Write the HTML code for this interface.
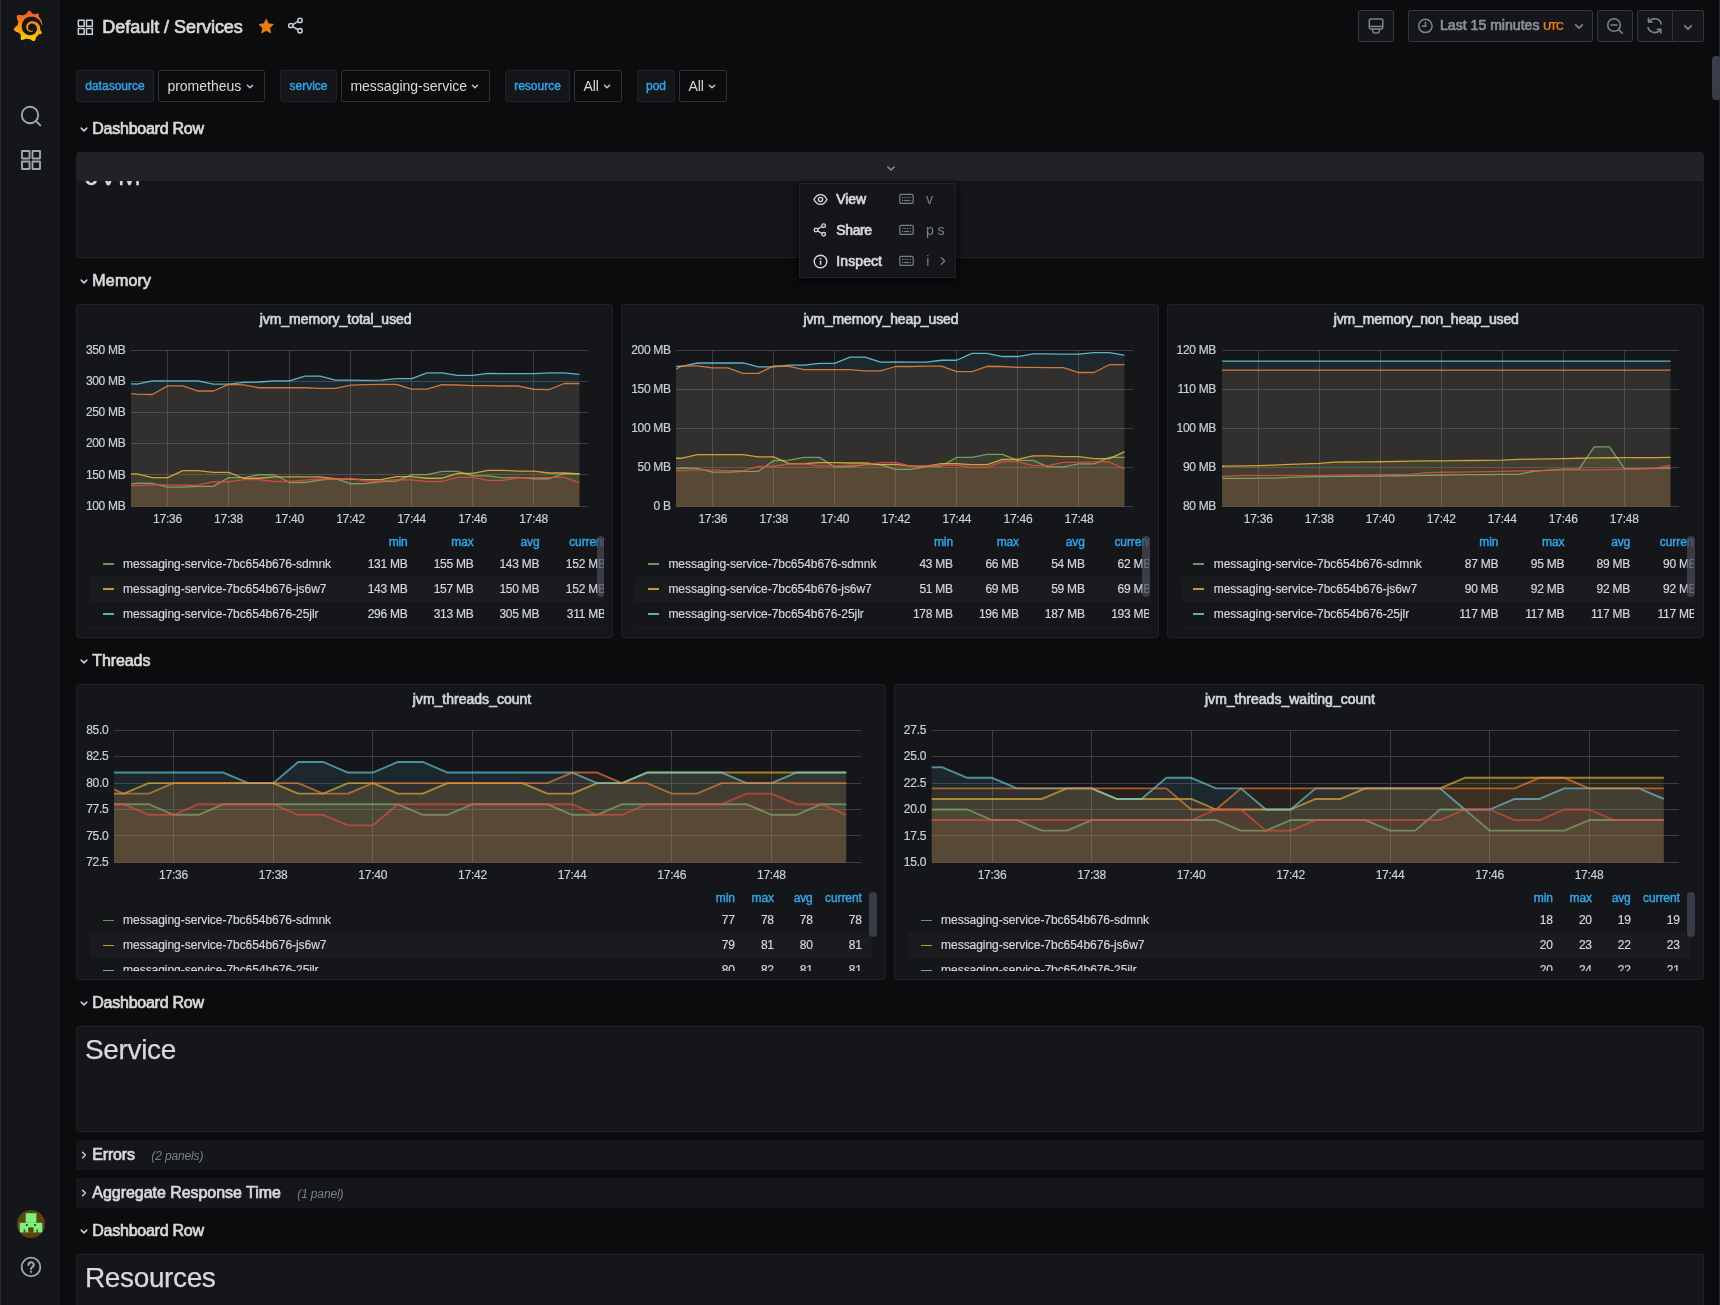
<!DOCTYPE html>
<html><head><meta charset="utf-8"><title>Services - Grafana</title>
<style>
html,body{margin:0;padding:0;background:#0b0c0e;}
body{width:1720px;height:1305px;position:relative;overflow:hidden;font-family:"Liberation Sans",sans-serif;}
.t{position:absolute;white-space:nowrap;margin:0;padding:0;}
.b{position:absolute;display:block;}
#root{position:absolute;left:0;top:0;width:1720px;height:1305px;will-change:transform;}
</style></head><body><div id="root">
<div class="b" style="left:0px;top:0px;width:60px;height:1305px;background:#141619;"></div>
<div class="b" style="left:0px;top:0px;width:1px;height:1305px;background:#2b2d32;"></div>
<svg class="b" style="left:13.1px;top:9.8px;" width="30" height="31.5" viewBox="0 0 351 365"><defs><linearGradient id="lg" gradientUnits="userSpaceOnUse" x1="175.5" y1="445" x2="175.5" y2="30"><stop offset="0" stop-color="#FFF100"/><stop offset="1" stop-color="#F05A28"/></linearGradient></defs><path fill="url(#lg)" d="M342,161.2c-0.6-6.1-1.6-13.1-3.6-20.9c-2-7.7-5-16.2-9.4-25c-4.4-8.8-10.1-17.9-17.5-26.8c-2.9-3.5-6.1-6.9-9.5-10.2c5.1-20.3-6.2-37.9-6.2-37.9c-19.5-1.2-31.9,6.1-36.5,9.4c-0.8-0.3-1.5-0.7-2.3-1c-3.3-1.3-6.7-2.6-10.3-3.7c-3.5-1.1-7.1-2.1-10.8-3c-3.7-0.9-7.4-1.6-11.2-2.2c-0.7-0.1-1.3-0.2-2-0.3c-8.5-27.2-32.9-38.6-32.9-38.6c-27.3,17.3-32.4,41.5-32.4,41.5s-0.1,0.5-0.3,1.4c-1.5,0.4-3,0.9-4.5,1.3c-2.1,0.6-4.2,1.4-6.2,2.2c-2.1,0.8-4.1,1.6-6.2,2.5c-4.1,1.8-8.2,3.8-12.2,6c-3.9,2.2-7.7,4.6-11.4,7.1c-0.5-0.2-1-0.4-1-0.4c-37.8-14.4-71.3,2.9-71.3,2.9c-3.1,40.2,15.1,65.5,18.7,70.1c-0.9,2.5-1.7,5-2.5,7.5c-2.8,9.1-4.9,18.4-6.2,28.1c-0.2,1.4-0.4,2.8-0.5,4.2C18.8,192.7,8.5,228,8.5,228c29.1,33.5,63.1,35.6,63.1,35.6c0,0,0.1-0.1,0.1-0.1c4.3,7.7,9.3,15,14.9,21.9c2.4,2.9,4.8,5.6,7.4,8.3c-10.6,30.4,1.5,55.6,1.5,55.6c32.4,1.2,53.7-14.2,58.2-17.7c3.2,1.1,6.5,2.1,9.8,2.9c10,2.6,20.2,4.1,30.4,4.5c2.5,0.1,5.1,0.2,7.6,0.1l1.2,0l0.8,0l1.6,0l1.6-0.1l0,0.1c15.3,21.8,42.1,24.9,42.1,24.9c19.1-20.1,20.2-40.1,20.2-44.4l0,0c0,0,0-0.1,0-0.3c0-0.4,0-0.6,0-0.6l0,0c0-0.3,0-0.6,0-0.9c4-2.8,7.8-5.8,11.4-9.1c7.6-6.9,14.3-14.8,19.9-23.3c0.5-0.8,1-1.6,1.5-2.4c21.6,1.2,36.9-13.4,36.9-13.4c-3.6-22.5-16.4-33.5-19.1-35.6l0,0c0,0-0.1-0.1-0.3-0.2c-0.2-0.1-0.2-0.2-0.2-0.2c0,0,0,0,0,0c-0.1-0.1-0.3-0.2-0.5-0.3c0.1-1.4,0.2-2.7,0.3-4.1c0.2-2.4,0.2-4.9,0.2-7.3l0-1.8l0-0.9l0-0.5c0-0.6,0-0.4,0-0.6l-0.1-1.5l-0.1-2c0-0.7-0.1-1.3-0.2-1.9c-0.1-0.6-0.1-1.3-0.2-1.9l-0.2-1.9l-0.3-1.9c-0.4-2.5-0.8-4.9-1.4-7.4c-2.3-9.7-6.1-18.9-11-27.2c-5-8.3-11.2-15.6-18.3-21.8c-7-6.2-14.9-11.2-23.1-14.9c-8.3-3.7-16.9-6.1-25.5-7.2c-4.3-0.6-8.6-0.8-12.9-0.7l-1.6,0l-0.4,0c-0.1,0-0.6,0-0.5,0l-0.7,0l-1.6,0.1c-0.6,0-1.2,0.1-1.7,0.1c-2.2,0.2-4.4,0.5-6.5,0.9c-8.6,1.6-16.7,4.7-23.8,9c-7.1,4.3-13.3,9.6-18.3,15.6c-5,6-8.9,12.7-11.6,19.6c-2.7,6.9-4.2,14.1-4.6,21c-0.1,1.7-0.1,3.5-0.1,5.2c0,0.4,0,0.9,0,1.3l0.1,1.4c0.1,0.8,0.1,1.7,0.2,2.5c0.3,3.5,1,6.9,1.9,10.1c1.9,6.5,4.9,12.4,8.6,17.4c3.7,5,8.2,9.1,12.9,12.4c4.7,3.2,9.8,5.5,14.8,7c5,1.5,10,2.1,14.7,2.1c0.6,0,1.2,0,1.7,0c0.3,0,0.6,0,0.9,0c0.3,0,0.6,0,0.9-0.1c0.5,0,1-0.1,1.5-0.1c0.1,0,0.3,0,0.4-0.1l0.5-0.1c0.3,0,0.6-0.1,0.9-0.1c0.6-0.1,1.1-0.2,1.7-0.3c0.6-0.1,1.1-0.2,1.6-0.4c1.1-0.2,2.1-0.6,3.1-0.9c2-0.7,4-1.5,5.7-2.4c1.8-0.9,3.4-2,5-3c0.4-0.3,0.9-0.6,1.3-1c1.6-1.3,1.9-3.7,0.6-5.3c-1.1-1.4-3.1-1.8-4.7-0.9c-0.4,0.2-0.8,0.4-1.2,0.6c-1.4,0.7-2.8,1.3-4.3,1.8c-1.5,0.5-3.1,0.9-4.7,1.2c-0.8,0.1-1.6,0.2-2.5,0.3c-0.4,0-0.8,0.1-1.3,0.1c-0.4,0-0.9,0-1.2,0c-0.4,0-0.8,0-1.2,0c-0.5,0-1,0-1.5-0.1c0,0-0.3,0-0.1,0l-0.2,0l-0.3,0c-0.2,0-0.5,0-0.7-0.1c-0.5-0.1-0.9-0.1-1.4-0.2c-3.7-0.5-7.4-1.6-10.9-3.2c-3.6-1.6-7-3.8-10.1-6.6c-3.1-2.8-5.8-6.1-7.9-9.9c-2.1-3.8-3.6-8-4.3-12.4c-0.3-2.2-0.5-4.5-0.4-6.7c0-0.6,0.1-1.2,0.1-1.8c0,0.2,0-0.1,0-0.1l0-0.2l0-0.5c0-0.3,0.1-0.6,0.1-0.9c0.1-1.2,0.3-2.4,0.5-3.6c1.7-9.6,6.5-19,13.9-26.1c1.9-1.8,3.9-3.4,6-4.9c2.1-1.5,4.4-2.8,6.8-3.9c2.4-1.1,4.8-2,7.4-2.7c2.5-0.7,5.1-1.1,7.8-1.4c1.3-0.1,2.6-0.2,4-0.2c0.4,0,0.6,0,0.9,0l1.1,0l0.7,0c0.3,0,0,0,0.1,0l0.3,0l1.1,0.1c2.9,0.2,5.7,0.6,8.5,1.3c5.6,1.2,11.1,3.3,16.2,6.1c10.2,5.7,18.9,14.5,24.2,25.1c2.7,5.3,4.6,11,5.5,16.9c0.2,1.5,0.4,3,0.5,4.5l0.1,1.1l0.1,1.1c0,0.4,0,0.8,0,1.1c0,0.4,0,0.8,0,1.1l0,1l0,1.1c0,0.7-0.1,1.9-0.1,2.6c-0.1,1.6-0.3,3.3-0.5,4.9c-0.2,1.6-0.5,3.2-0.8,4.8c-0.3,1.6-0.7,3.2-1.1,4.7c-0.8,3.1-1.8,6.2-3,9.3c-2.4,6-5.6,11.8-9.4,17.1c-7.7,10.6-18.2,19.2-30.2,24.7c-6,2.7-12.3,4.7-18.8,5.7c-3.2,0.6-6.5,0.9-9.8,1l-0.6,0l-0.5,0l-1.1,0l-1.6,0l-0.8,0c0.4,0-0.1,0-0.1,0l-0.3,0c-1.8,0-3.5-0.1-5.3-0.3c-7-0.5-13.9-1.8-20.7-3.7c-6.7-1.9-13.2-4.6-19.4-7.8c-12.3-6.6-23.4-15.6-32-26.5c-4.3-5.4-8.1-11.3-11.2-17.4c-3.1-6.1-5.6-12.6-7.4-19.1c-1.8-6.6-2.9-13.3-3.4-20.1l-0.1-1.3l0-0.3l0-0.3l0-0.6l0-1.1l0-0.3l0-0.4l0-0.8l0-1.6l0-0.3c0,0,0,0.1,0-0.1l0-0.6c0-0.8,0-1.7,0-2.5c0.1-3.3,0.4-6.8,0.8-10.2c0.4-3.4,1-6.9,1.7-10.3c0.7-3.4,1.5-6.8,2.5-10.2c1.9-6.7,4.3-13.2,7.1-19.3c5.7-12.2,13.1-23.1,22-31.8c2.2-2.2,4.5-4.2,6.9-6.2c2.4-1.9,4.9-3.7,7.5-5.4c2.5-1.7,5.2-3.2,7.9-4.6c1.3-0.7,2.7-1.4,4.1-2c0.7-0.3,1.4-0.6,2.1-0.9c0.7-0.3,1.4-0.6,2.1-0.9c2.8-1.2,5.7-2.2,8.7-3.1c0.7-0.2,1.5-0.4,2.2-0.7c0.7-0.2,1.5-0.4,2.2-0.6c1.5-0.4,3-0.8,4.5-1.1c0.7-0.2,1.5-0.3,2.3-0.5c0.8-0.2,1.5-0.3,2.3-0.5c0.8-0.1,1.5-0.3,2.3-0.4l1.1-0.2l1.2-0.2c0.8-0.1,1.5-0.2,2.3-0.3c0.9-0.1,1.7-0.2,2.6-0.3c0.7-0.1,1.9-0.2,2.6-0.3c0.5-0.1,1.1-0.1,1.6-0.2l1.1-0.1l0.5-0.1l0.6,0c0.9-0.1,1.7-0.1,2.6-0.2l1.3-0.1c0,0,0.5,0,0.1,0l0.3,0l0.6,0c0.7,0,1.5-0.1,2.2-0.1c2.9-0.1,5.9-0.1,8.8,0c5.8,0.2,11.5,0.9,17,1.9c11.1,2.1,21.5,5.6,31,10.3c9.5,4.6,17.9,10.3,25.3,16.5c0.5,0.4,0.9,0.8,1.4,1.2c0.4,0.4,0.9,0.8,1.3,1.2c0.9,0.8,1.7,1.6,2.6,2.4c0.9,0.8,1.7,1.6,2.5,2.4c0.8,0.8,1.6,1.6,2.4,2.5c3.1,3.3,6,6.6,8.6,10c5.2,6.7,9.4,13.5,12.7,19.9c0.2,0.4,0.4,0.8,0.6,1.2c0.2,0.4,0.4,0.8,0.6,1.2c0.4,0.8,0.8,1.6,1.1,2.4c0.4,0.8,0.7,1.5,1.1,2.3c0.3,0.8,0.7,1.5,1,2.3c1.2,3,2.4,5.9,3.3,8.6c1.5,4.4,2.6,8.3,3.5,11.7c0.3,1.4,1.6,2.3,3,2.1c1.5-0.1,2.6-1.3,2.6-2.8C342.6,170.4,342.5,166.1,342,161.2z"/></svg>
<svg class="b" style="left:19px;top:104px;" width="24" height="24" viewBox="0 0 24 24"><circle cx="11" cy="11" r="8.2" fill="none" stroke="#9fa7b3" stroke-width="1.9"/><path d="M17 17 L21.3 21.3" stroke="#9fa7b3" stroke-width="1.9" stroke-linecap="round"/></svg>
<svg class="b" style="left:18.85px;top:147.8px;" width="24" height="24" viewBox="0 0 24 24"><rect x="3" y="3" width="7.5" height="7.5" rx="0.15" fill="none" stroke="#9fa7b3" stroke-width="1.9"/><rect x="13.5" y="3" width="7.5" height="7.5" rx="0.15" fill="none" stroke="#9fa7b3" stroke-width="1.9"/><rect x="3" y="13.5" width="7.5" height="7.5" rx="0.15" fill="none" stroke="#9fa7b3" stroke-width="1.9"/><rect x="13.5" y="13.5" width="7.5" height="7.5" rx="0.15" fill="none" stroke="#9fa7b3" stroke-width="1.9"/></svg>
<svg class="b" style="left:17px;top:1210px;" width="28" height="28" viewBox="0 0 28 28"><defs><clipPath id="avc"><circle cx="14" cy="14" r="14"/></clipPath></defs><g clip-path="url(#avc)"><rect width="28" height="28" fill="#5c4411"/><rect x="8.7" y="3.2" width="10.7" height="9.6" fill="#7cf07c"/><rect x="2.7" y="12.8" width="22.6" height="9.6" fill="#7cf07c"/><rect x="8.9" y="14.1" width="1.8" height="1.8" fill="#3e3a10"/><rect x="17.1" y="14.1" width="1.8" height="1.8" fill="#3e3a10"/><rect x="11.2" y="17.4" width="5.4" height="5.2" fill="#5c4411"/><rect x="6.7" y="19.4" width="1.5" height="3.2" fill="#5c4411"/><rect x="19.4" y="19.4" width="1.5" height="3.2" fill="#5c4411"/></g></svg>
<svg class="b" style="left:19px;top:1255px;" width="24" height="24" viewBox="0 0 24 24"><circle cx="12" cy="12" r="9.3" fill="none" stroke="#9fa7b3" stroke-width="1.8"/><path d="M9.5 9.9 a2.6 2.6 0 1 1 3.9 2.2 c-.9 .55-1.4 1-1.4 2" fill="none" stroke="#9fa7b3" stroke-width="2.0" stroke-linecap="round"/><circle cx="12" cy="16.8" r="1.15" fill="#9fa7b3"/></svg>
<svg class="b" style="left:75.55px;top:17.8px;" width="18.7" height="18.7" viewBox="0 0 24 24"><rect x="3" y="3" width="7.5" height="7.5" rx="0.15" fill="none" stroke="#c7d0d9" stroke-width="1.9"/><rect x="13.5" y="3" width="7.5" height="7.5" rx="0.15" fill="none" stroke="#c7d0d9" stroke-width="1.9"/><rect x="3" y="13.5" width="7.5" height="7.5" rx="0.15" fill="none" stroke="#c7d0d9" stroke-width="1.9"/><rect x="13.5" y="13.5" width="7.5" height="7.5" rx="0.15" fill="none" stroke="#c7d0d9" stroke-width="1.9"/></svg>
<div class="t" style="left:102.30px;top:13.70px;font-size:18px;line-height:27px;color:#d8d9da;letter-spacing:-0.031px;-webkit-text-stroke:0.7px currentColor;">Default / Services</div>
<svg class="b" style="left:257.9px;top:17.9px;" width="16.4" height="16.4" viewBox="0 0 18 18"><path d="M9 1.2 L11.4 6.3 L17 7 L12.9 10.9 L14 16.5 L9 13.7 L4 16.5 L5.1 10.9 L1 7 L6.6 6.3 Z" fill="#eb7b18" stroke="#eb7b18" stroke-width="0.8" stroke-linejoin="round"/></svg>
<svg class="b" style="left:286.3px;top:16.4px;" width="19.2" height="19.2" viewBox="0 0 24 24"><g fill="none" stroke="#c7d0d9" stroke-width="1.9"><circle cx="17.5" cy="5.5" r="2.7"/><circle cx="6" cy="12" r="2.7"/><circle cx="17.5" cy="18.5" r="2.7"/><path d="M8.4 10.7 L15.1 6.8 M8.4 13.3 L15.1 17.2"/></g></svg>
<div class="b" style="left:1358px;top:10px;width:36px;height:32px;background:#141619;border:1px solid #33363a;box-sizing:border-box;border-radius:2px;"></div>
<svg class="b" style="left:1367px;top:17px;" width="18" height="18" viewBox="0 0 18 18"><g fill="none" stroke="#7f848c" stroke-width="1.5" stroke-linejoin="round"><rect x="5.9" y="11" width="6.3" height="4.9" rx="1.3"/><rect x="2.3" y="2.1" width="13.5" height="9.9" rx="1.4" fill="#141619"/><path d="M2.3 9.4 H15.8"/></g></svg>
<div class="b" style="left:1408px;top:10px;width:185px;height:32px;background:#141619;border:1px solid #33363a;box-sizing:border-box;border-radius:2px;"></div>
<svg class="b" style="left:1416px;top:17px;" width="18" height="18" viewBox="0 0 18 18"><g fill="none" stroke="#7f848c" stroke-width="1.5" stroke-linecap="round"><circle cx="9.4" cy="8.9" r="6.7"/><path d="M9.5 5.2 V9.3 H6.3"/></g></svg>
<div class="t" style="left:1440.00px;top:15.00px;font-size:14px;line-height:21px;color:#8b9099;letter-spacing:0.044px;-webkit-text-stroke:0.7px currentColor;">Last 15 minutes</div>
<div class="t" style="left:1543.00px;top:18.00px;font-size:11.5px;line-height:17px;color:#eb7b18;letter-spacing:-1.345px;font-weight:700;">UTC</div>
<svg class="b" style="left:1571px;top:18px;" width="16" height="16" viewBox="0 0 16 16"><path d="M4.7 6.85 L8 10.15 L11.3 6.85" fill="none" stroke="#7f848c" stroke-width="1.6" stroke-linecap="round" stroke-linejoin="round"/></svg>
<div class="b" style="left:1597px;top:10px;width:36px;height:32px;background:#141619;border:1px solid #33363a;box-sizing:border-box;border-radius:2px;"></div>
<svg class="b" style="left:1606px;top:17px;" width="18" height="18" viewBox="0 0 18 18"><g fill="none" stroke="#7f848c" stroke-width="1.6" stroke-linecap="round"><circle cx="8" cy="8" r="6.3"/><path d="M5.2 8 H10.8"/><path d="M12.7 12.7 L16.3 16.3"/></g></svg>
<div class="b" style="left:1637px;top:10px;width:67px;height:32px;background:#141619;border:1px solid #33363a;box-sizing:border-box;border-radius:2px;"></div>
<div class="b" style="left:1672px;top:10px;width:1px;height:32px;background:#33363a;"></div>
<svg class="b" style="left:1645.3px;top:16.4px;" width="19.3" height="19.3" viewBox="0 0 18 18"><g fill="none" stroke="#7f848c" stroke-width="1.5" stroke-linecap="round" stroke-linejoin="round"><path d="M15.2 7.2 A6.5 6.5 0 0 0 3.6 5.4"/><path d="M2.8 10.8 A6.5 6.5 0 0 0 14.4 12.6"/><path d="M3.2 2.2 V5.6 H6.6"/><path d="M14.8 15.8 V12.4 H11.4"/></g></svg>
<svg class="b" style="left:1680px;top:18.5px;" width="16" height="16" viewBox="0 0 16 16"><path d="M4.7 6.85 L8 10.15 L11.3 6.85" fill="none" stroke="#7f848c" stroke-width="1.6" stroke-linecap="round" stroke-linejoin="round"/></svg>
<div class="b" style="left:1712px;top:56px;width:9px;height:44px;background:linear-gradient(#3c3e50,#3a3b40);border-radius:4px;"></div>
<div class="b" style="left:1719px;top:0px;width:1px;height:1305px;background:rgba(60,62,68,0.55);"></div>
<div class="b" style="left:76px;top:70px;width:78px;height:32px;background:#141619;border:1px solid #202226;box-sizing:border-box;border-radius:2px;"></div>
<div class="t" style="left:85.26px;top:77.00px;font-size:12px;line-height:18px;color:#33a2e5;letter-spacing:0.013px;-webkit-text-stroke:0.45px currentColor;">datasource</div>
<div class="b" style="left:158px;top:70px;width:107px;height:32px;background:#0b0c0e;border:1px solid #2c3235;box-sizing:border-box;border-radius:2px;"></div>
<div class="t" style="left:167.40px;top:75.50px;font-size:14px;line-height:21px;color:#d8d9da;letter-spacing:-0.003px;">prometheus</div>
<svg class="b" style="left:241.5px;top:77.5px;" width="16" height="16" viewBox="0 0 16 16"><path d="M5.4 7.2 L8 9.8 L10.6 7.2" fill="none" stroke="#c7d0d9" stroke-width="1.3" stroke-linecap="round" stroke-linejoin="round"/></svg>
<div class="b" style="left:280px;top:70px;width:57px;height:32px;background:#141619;border:1px solid #202226;box-sizing:border-box;border-radius:2px;"></div>
<div class="t" style="left:289.49px;top:77.00px;font-size:12px;line-height:18px;color:#33a2e5;-webkit-text-stroke:0.45px currentColor;">service</div>
<div class="b" style="left:341px;top:70px;width:149px;height:32px;background:#0b0c0e;border:1px solid #2c3235;box-sizing:border-box;border-radius:2px;"></div>
<div class="t" style="left:350.40px;top:75.50px;font-size:14px;line-height:21px;color:#d8d9da;">messaging-service</div>
<svg class="b" style="left:466.5px;top:77.5px;" width="16" height="16" viewBox="0 0 16 16"><path d="M5.4 7.2 L8 9.8 L10.6 7.2" fill="none" stroke="#c7d0d9" stroke-width="1.3" stroke-linecap="round" stroke-linejoin="round"/></svg>
<div class="b" style="left:505px;top:70px;width:65px;height:32px;background:#141619;border:1px solid #202226;box-sizing:border-box;border-radius:2px;"></div>
<div class="t" style="left:514.16px;top:77.00px;font-size:12px;line-height:18px;color:#33a2e5;-webkit-text-stroke:0.45px currentColor;">resource</div>
<div class="b" style="left:574px;top:70px;width:48px;height:32px;background:#0b0c0e;border:1px solid #2c3235;box-sizing:border-box;border-radius:2px;"></div>
<div class="t" style="left:583.40px;top:75.50px;font-size:14px;line-height:21px;color:#d8d9da;">All</div>
<svg class="b" style="left:598.5px;top:77.5px;" width="16" height="16" viewBox="0 0 16 16"><path d="M5.4 7.2 L8 9.8 L10.6 7.2" fill="none" stroke="#c7d0d9" stroke-width="1.3" stroke-linecap="round" stroke-linejoin="round"/></svg>
<div class="b" style="left:637px;top:70px;width:38px;height:32px;background:#141619;border:1px solid #202226;box-sizing:border-box;border-radius:2px;"></div>
<div class="t" style="left:645.99px;top:77.00px;font-size:12px;line-height:18px;color:#33a2e5;-webkit-text-stroke:0.45px currentColor;">pod</div>
<div class="b" style="left:679px;top:70px;width:48px;height:32px;background:#0b0c0e;border:1px solid #2c3235;box-sizing:border-box;border-radius:2px;"></div>
<div class="t" style="left:688.40px;top:75.50px;font-size:14px;line-height:21px;color:#d8d9da;">All</div>
<svg class="b" style="left:703.5px;top:77.5px;" width="16" height="16" viewBox="0 0 16 16"><path d="M5.4 7.2 L8 9.8 L10.6 7.2" fill="none" stroke="#c7d0d9" stroke-width="1.3" stroke-linecap="round" stroke-linejoin="round"/></svg>
<svg class="b" style="left:75.5px;top:120.5px;" width="16" height="16" viewBox="0 0 16 16"><path d="M5.2 7.1 L8 9.9 L10.8 7.1" fill="none" stroke="#c7d0d9" stroke-width="1.5" stroke-linecap="round" stroke-linejoin="round"/></svg>
<div class="t" style="left:92.30px;top:116.70px;font-size:16px;line-height:24px;color:#d8d9da;letter-spacing:-0.248px;-webkit-text-stroke:0.7px currentColor;">Dashboard Row</div>
<svg class="b" style="left:75.5px;top:272.5px;" width="16" height="16" viewBox="0 0 16 16"><path d="M5.2 7.1 L8 9.9 L10.8 7.1" fill="none" stroke="#c7d0d9" stroke-width="1.5" stroke-linecap="round" stroke-linejoin="round"/></svg>
<div class="t" style="left:92.30px;top:268.70px;font-size:16px;line-height:24px;color:#d8d9da;letter-spacing:0.203px;-webkit-text-stroke:0.7px currentColor;">Memory</div>
<svg class="b" style="left:75.5px;top:652.5px;" width="16" height="16" viewBox="0 0 16 16"><path d="M5.2 7.1 L8 9.9 L10.8 7.1" fill="none" stroke="#c7d0d9" stroke-width="1.5" stroke-linecap="round" stroke-linejoin="round"/></svg>
<div class="t" style="left:92.30px;top:648.70px;font-size:16px;line-height:24px;color:#d8d9da;letter-spacing:-0.100px;-webkit-text-stroke:0.7px currentColor;">Threads</div>
<svg class="b" style="left:75.5px;top:994.5px;" width="16" height="16" viewBox="0 0 16 16"><path d="M5.2 7.1 L8 9.9 L10.8 7.1" fill="none" stroke="#c7d0d9" stroke-width="1.5" stroke-linecap="round" stroke-linejoin="round"/></svg>
<div class="t" style="left:92.30px;top:990.70px;font-size:16px;line-height:24px;color:#d8d9da;letter-spacing:-0.248px;-webkit-text-stroke:0.7px currentColor;">Dashboard Row</div>
<div class="b" style="left:76px;top:1140px;width:1628px;height:30px;background:#141619;"></div>
<svg class="b" style="left:75.5px;top:1147px;" width="16" height="16" viewBox="0 0 16 16"><path d="M6.6 5.2 L9.4 8 L6.6 10.8" fill="none" stroke="#c7d0d9" stroke-width="1.5" stroke-linecap="round" stroke-linejoin="round"/></svg>
<div class="t" style="left:92.30px;top:1142.70px;font-size:16px;line-height:24px;color:#d8d9da;letter-spacing:-0.176px;-webkit-text-stroke:0.7px currentColor;">Errors</div>
<div class="t" style="left:151.30px;top:1146.50px;font-size:12px;line-height:18px;color:#7b8087;letter-spacing:-0.136px;font-style:italic;">(2 panels)</div>
<div class="b" style="left:76px;top:1178px;width:1628px;height:30px;background:#141619;"></div>
<svg class="b" style="left:75.5px;top:1185px;" width="16" height="16" viewBox="0 0 16 16"><path d="M6.6 5.2 L9.4 8 L6.6 10.8" fill="none" stroke="#c7d0d9" stroke-width="1.5" stroke-linecap="round" stroke-linejoin="round"/></svg>
<div class="t" style="left:92.30px;top:1180.70px;font-size:16px;line-height:24px;color:#d8d9da;letter-spacing:-0.041px;-webkit-text-stroke:0.7px currentColor;">Aggregate Response Time</div>
<div class="t" style="left:297.30px;top:1184.50px;font-size:12px;line-height:18px;color:#7b8087;letter-spacing:-0.151px;font-style:italic;">(1 panel)</div>
<svg class="b" style="left:75.5px;top:1222.5px;" width="16" height="16" viewBox="0 0 16 16"><path d="M5.2 7.1 L8 9.9 L10.8 7.1" fill="none" stroke="#c7d0d9" stroke-width="1.5" stroke-linecap="round" stroke-linejoin="round"/></svg>
<div class="t" style="left:92.30px;top:1218.70px;font-size:16px;line-height:24px;color:#d8d9da;letter-spacing:-0.248px;-webkit-text-stroke:0.7px currentColor;">Dashboard Row</div>
<div class="b" style="left:76px;top:152px;width:1628px;height:106px;background:#141619;border:1px solid #202226;box-sizing:border-box;border-radius:3px;"></div>
<div class="t" style="left:85.00px;top:155.30px;font-size:28px;line-height:42px;color:#d8d9da;-webkit-text-stroke:0.25px currentColor;">JVM</div>
<div class="b" style="left:77px;top:153px;width:1626px;height:28px;background:#202226;border-radius:2px 2px 0 0;"></div>
<svg class="b" style="left:883px;top:159.5px;" width="16" height="16" viewBox="0 0 16 16"><path d="M4.8 6.9 L8 10.1 L11.2 6.9" fill="none" stroke="#8e959e" stroke-width="1.4" stroke-linecap="round" stroke-linejoin="round"/></svg>
<div class="b" style="left:76px;top:1026px;width:1628px;height:106px;background:#141619;border:1px solid #202226;box-sizing:border-box;border-radius:3px;"></div>
<div class="t" style="left:85.00px;top:1028.50px;font-size:28px;line-height:42px;color:#d8d9da;letter-spacing:-0.338px;-webkit-text-stroke:0.25px currentColor;">Service</div>
<div class="b" style="left:76px;top:1254px;width:1628px;height:106px;background:#141619;border:1px solid #202226;box-sizing:border-box;border-radius:3px;"></div>
<div class="t" style="left:85.00px;top:1256.50px;font-size:28px;line-height:42px;color:#d8d9da;letter-spacing:-0.371px;-webkit-text-stroke:0.25px currentColor;">Resources</div>
<div class="b" style="left:76.0px;top:304px;width:537.3333333333334px;height:334px;background:#141619;border:1px solid #202226;box-sizing:border-box;border-radius:3px;"></div>
<div class="t" style="left:259.65px;top:309.00px;font-size:14px;line-height:21px;color:#cfd5dd;letter-spacing:-0.025px;-webkit-text-stroke:0.7px currentColor;">jvm_memory_total_used</div>
<svg class="b" style="left:76.0px;top:304px;" width="538" height="334" viewBox="0 0 538 334"><path d="M55.0 46.5H511.8M55.0 77.5H511.8M55.0 108.5H511.8M55.0 139.5H511.8M55.0 170.5H511.8M55.0 202.5H511.8M91.5 46.2V202.2M152.5 46.2V202.2M213.5 46.2V202.2M274.5 46.2V202.2M335.5 46.2V202.2M396.5 46.2V202.2M457.5 46.2V202.2" stroke="rgba(200,200,200,0.22)" stroke-width="1" fill="none" shape-rendering="crispEdges"/><defs><clipPath id="c76_304"><rect x="55.0" y="44.2" width="456.8" height="158.5"/></clipPath></defs><g clip-path="url(#c76_304)"><polygon points="45.83,202.70 45.83,181.92 61.09,179.17 76.34,179.42 91.60,183.04 106.85,183.04 122.11,182.36 137.37,182.36 152.62,173.56 167.88,173.56 183.13,170.75 198.38,170.75 213.64,178.49 228.89,178.49 244.15,176.05 259.40,174.56 274.66,179.74 289.91,179.61 305.17,177.49 320.43,177.18 335.68,170.63 350.94,170.63 366.19,167.38 381.45,167.38 396.70,171.81 411.96,171.81 427.21,173.87 442.47,173.43 457.72,174.74 472.98,174.74 488.23,169.69 503.49,169.81 503.49,202.70" fill="#7EB26D" fill-opacity="0.1"/><polygon points="45.83,202.70 45.83,169.81 61.09,169.81 76.34,173.56 91.60,173.56 106.85,166.57 122.11,166.63 137.37,168.38 152.62,168.38 167.88,174.24 183.13,174.24 198.38,172.87 213.64,172.87 228.89,172.87 244.15,172.87 259.40,174.74 274.66,175.06 289.91,175.56 305.17,175.56 320.43,172.62 335.68,172.62 350.94,174.24 366.19,174.24 381.45,169.32 396.70,169.32 411.96,166.38 427.21,166.38 442.47,167.07 457.72,167.07 472.98,169.00 488.23,169.00 503.49,169.81 503.49,202.70" fill="#EAB839" fill-opacity="0.1"/><polygon points="45.83,202.70 45.83,79.90 61.09,80.02 76.34,76.90 91.60,76.90 106.85,76.90 122.11,76.90 137.37,80.15 152.62,80.15 167.88,78.34 183.13,78.02 198.38,76.90 213.64,76.90 228.89,72.03 244.15,72.03 259.40,76.21 274.66,76.03 289.91,76.28 305.17,76.15 320.43,74.65 335.68,74.65 350.94,68.79 366.19,68.79 381.45,71.41 396.70,71.41 411.96,69.29 427.21,69.60 442.47,69.60 457.72,69.60 472.98,68.79 488.23,68.79 503.49,70.41 503.49,202.70" fill="#6ED0E0" fill-opacity="0.1"/><polygon points="45.83,202.70 45.83,88.63 61.09,90.19 76.34,90.50 91.60,81.83 106.85,81.83 122.11,87.01 137.37,87.01 152.62,80.40 167.88,80.96 183.13,83.76 198.38,83.76 213.64,83.76 228.89,83.76 244.15,84.45 259.40,84.45 274.66,81.08 289.91,80.71 305.17,80.33 320.43,80.33 335.68,85.08 350.94,85.08 366.19,80.71 381.45,81.02 396.70,81.64 411.96,81.64 427.21,82.02 442.47,82.02 457.72,85.26 472.98,85.57 488.23,79.52 503.49,79.52 503.49,202.70" fill="#EF843C" fill-opacity="0.1"/><polygon points="45.83,202.70 45.83,181.67 61.09,181.67 76.34,180.86 91.60,180.86 106.85,181.23 122.11,181.23 137.37,177.74 152.62,177.74 167.88,175.68 183.13,175.68 198.38,177.49 213.64,177.49 228.89,176.05 244.15,174.99 259.40,174.99 274.66,174.37 289.91,176.99 305.17,176.99 320.43,175.56 335.68,175.87 350.94,177.49 366.19,177.49 381.45,173.43 396.70,173.43 411.96,176.37 427.21,176.37 442.47,173.75 457.72,173.75 472.98,173.43 488.23,173.43 503.49,178.61 503.49,202.70" fill="#E24D42" fill-opacity="0.1"/><polyline points="45.83,181.92 61.09,179.17 76.34,179.42 91.60,183.04 106.85,183.04 122.11,182.36 137.37,182.36 152.62,173.56 167.88,173.56 183.13,170.75 198.38,170.75 213.64,178.49 228.89,178.49 244.15,176.05 259.40,174.56 274.66,179.74 289.91,179.61 305.17,177.49 320.43,177.18 335.68,170.63 350.94,170.63 366.19,167.38 381.45,167.38 396.70,171.81 411.96,171.81 427.21,173.87 442.47,173.43 457.72,174.74 472.98,174.74 488.23,169.69 503.49,169.81" fill="none" stroke="#7EB26D" stroke-width="1.3" stroke-opacity="0.84" stroke-linejoin="round"/><polyline points="45.83,169.81 61.09,169.81 76.34,173.56 91.60,173.56 106.85,166.57 122.11,166.63 137.37,168.38 152.62,168.38 167.88,174.24 183.13,174.24 198.38,172.87 213.64,172.87 228.89,172.87 244.15,172.87 259.40,174.74 274.66,175.06 289.91,175.56 305.17,175.56 320.43,172.62 335.68,172.62 350.94,174.24 366.19,174.24 381.45,169.32 396.70,169.32 411.96,166.38 427.21,166.38 442.47,167.07 457.72,167.07 472.98,169.00 488.23,169.00 503.49,169.81" fill="none" stroke="#EAB839" stroke-width="1.3" stroke-opacity="0.84" stroke-linejoin="round"/><polyline points="45.83,79.90 61.09,80.02 76.34,76.90 91.60,76.90 106.85,76.90 122.11,76.90 137.37,80.15 152.62,80.15 167.88,78.34 183.13,78.02 198.38,76.90 213.64,76.90 228.89,72.03 244.15,72.03 259.40,76.21 274.66,76.03 289.91,76.28 305.17,76.15 320.43,74.65 335.68,74.65 350.94,68.79 366.19,68.79 381.45,71.41 396.70,71.41 411.96,69.29 427.21,69.60 442.47,69.60 457.72,69.60 472.98,68.79 488.23,68.79 503.49,70.41" fill="none" stroke="#6ED0E0" stroke-width="1.3" stroke-opacity="0.84" stroke-linejoin="round"/><polyline points="45.83,88.63 61.09,90.19 76.34,90.50 91.60,81.83 106.85,81.83 122.11,87.01 137.37,87.01 152.62,80.40 167.88,80.96 183.13,83.76 198.38,83.76 213.64,83.76 228.89,83.76 244.15,84.45 259.40,84.45 274.66,81.08 289.91,80.71 305.17,80.33 320.43,80.33 335.68,85.08 350.94,85.08 366.19,80.71 381.45,81.02 396.70,81.64 411.96,81.64 427.21,82.02 442.47,82.02 457.72,85.26 472.98,85.57 488.23,79.52 503.49,79.52" fill="none" stroke="#EF843C" stroke-width="1.3" stroke-opacity="0.84" stroke-linejoin="round"/><polyline points="45.83,181.67 61.09,181.67 76.34,180.86 91.60,180.86 106.85,181.23 122.11,181.23 137.37,177.74 152.62,177.74 167.88,175.68 183.13,175.68 198.38,177.49 213.64,177.49 228.89,176.05 244.15,174.99 259.40,174.99 274.66,174.37 289.91,176.99 305.17,176.99 320.43,175.56 335.68,175.87 350.94,177.49 366.19,177.49 381.45,173.43 396.70,173.43 411.96,176.37 427.21,176.37 442.47,173.75 457.72,173.75 472.98,173.43 488.23,173.43 503.49,178.61" fill="none" stroke="#E24D42" stroke-width="1.3" stroke-opacity="0.84" stroke-linejoin="round"/></g></svg>
<div class="t" style="left:85.89px;top:340.80px;font-size:12px;line-height:18px;color:#c7d0d9;letter-spacing:-0.310px;-webkit-text-stroke:0.2px currentColor;">350 MB</div>
<div class="t" style="left:85.89px;top:372.00px;font-size:12px;line-height:18px;color:#c7d0d9;letter-spacing:-0.310px;-webkit-text-stroke:0.2px currentColor;">300 MB</div>
<div class="t" style="left:85.89px;top:403.20px;font-size:12px;line-height:18px;color:#c7d0d9;letter-spacing:-0.310px;-webkit-text-stroke:0.2px currentColor;">250 MB</div>
<div class="t" style="left:85.89px;top:434.40px;font-size:12px;line-height:18px;color:#c7d0d9;letter-spacing:-0.310px;-webkit-text-stroke:0.2px currentColor;">200 MB</div>
<div class="t" style="left:85.89px;top:465.60px;font-size:12px;line-height:18px;color:#c7d0d9;letter-spacing:-0.310px;-webkit-text-stroke:0.2px currentColor;">150 MB</div>
<div class="t" style="left:85.89px;top:496.80px;font-size:12px;line-height:18px;color:#c7d0d9;letter-spacing:-0.310px;-webkit-text-stroke:0.2px currentColor;">100 MB</div>
<div class="t" style="left:153.07px;top:510.00px;font-size:12px;line-height:18px;color:#c7d0d9;letter-spacing:-0.240px;-webkit-text-stroke:0.2px currentColor;">17:36</div>
<div class="t" style="left:214.09px;top:510.00px;font-size:12px;line-height:18px;color:#c7d0d9;letter-spacing:-0.240px;-webkit-text-stroke:0.2px currentColor;">17:38</div>
<div class="t" style="left:275.11px;top:510.00px;font-size:12px;line-height:18px;color:#c7d0d9;letter-spacing:-0.240px;-webkit-text-stroke:0.2px currentColor;">17:40</div>
<div class="t" style="left:336.13px;top:510.00px;font-size:12px;line-height:18px;color:#c7d0d9;letter-spacing:-0.240px;-webkit-text-stroke:0.2px currentColor;">17:42</div>
<div class="t" style="left:397.15px;top:510.00px;font-size:12px;line-height:18px;color:#c7d0d9;letter-spacing:-0.240px;-webkit-text-stroke:0.2px currentColor;">17:44</div>
<div class="t" style="left:458.17px;top:510.00px;font-size:12px;line-height:18px;color:#c7d0d9;letter-spacing:-0.240px;-webkit-text-stroke:0.2px currentColor;">17:46</div>
<div class="t" style="left:519.19px;top:510.00px;font-size:12px;line-height:18px;color:#c7d0d9;letter-spacing:-0.240px;-webkit-text-stroke:0.2px currentColor;">17:48</div>
<div class="b" style="left:90.0px;top:533.7px;width:513.8px;height:95.5px;overflow:hidden;"><div class="b" style="left:12.5px;top:29.8px;width:11.3px;height:1.5px;background:#7EB26D;opacity:0.82;"></div><div class="t" style="left:33.10px;top:21.50px;font-size:12px;line-height:18px;color:#d2d5da;letter-spacing:-0.043px;-webkit-text-stroke:0.2px currentColor;">messaging-service-7bc654b676-sdmnk</div><div class="t" style="left:277.65px;top:21.50px;font-size:12px;line-height:18px;color:#d2d5da;letter-spacing:-0.241px;-webkit-text-stroke:0.2px currentColor;">131 MB</div><div class="t" style="left:343.65px;top:21.50px;font-size:12px;line-height:18px;color:#d2d5da;letter-spacing:-0.241px;-webkit-text-stroke:0.2px currentColor;">155 MB</div><div class="t" style="left:409.45px;top:21.50px;font-size:12px;line-height:18px;color:#d2d5da;letter-spacing:-0.241px;-webkit-text-stroke:0.2px currentColor;">143 MB</div><div class="t" style="left:475.85px;top:21.50px;font-size:12px;line-height:18px;color:#d2d5da;letter-spacing:-0.241px;-webkit-text-stroke:0.2px currentColor;">152 MB</div><div class="b" style="left:0px;top:43.5px;width:553.8333333333334px;height:25px;background:#191b1f;"></div><div class="b" style="left:12.5px;top:54.8px;width:11.3px;height:1.5px;background:#EAB839;opacity:0.82;"></div><div class="t" style="left:33.10px;top:46.50px;font-size:12px;line-height:18px;color:#d2d5da;letter-spacing:-0.042px;-webkit-text-stroke:0.2px currentColor;">messaging-service-7bc654b676-js6w7</div><div class="t" style="left:277.65px;top:46.50px;font-size:12px;line-height:18px;color:#d2d5da;letter-spacing:-0.241px;-webkit-text-stroke:0.2px currentColor;">143 MB</div><div class="t" style="left:343.65px;top:46.50px;font-size:12px;line-height:18px;color:#d2d5da;letter-spacing:-0.241px;-webkit-text-stroke:0.2px currentColor;">157 MB</div><div class="t" style="left:409.45px;top:46.50px;font-size:12px;line-height:18px;color:#d2d5da;letter-spacing:-0.241px;-webkit-text-stroke:0.2px currentColor;">150 MB</div><div class="t" style="left:475.85px;top:46.50px;font-size:12px;line-height:18px;color:#d2d5da;letter-spacing:-0.241px;-webkit-text-stroke:0.2px currentColor;">152 MB</div><div class="b" style="left:12.5px;top:79.8px;width:11.3px;height:1.5px;background:#6ED0E0;opacity:0.82;"></div><div class="t" style="left:33.10px;top:71.50px;font-size:12px;line-height:18px;color:#d2d5da;letter-spacing:-0.041px;-webkit-text-stroke:0.2px currentColor;">messaging-service-7bc654b676-25jlr</div><div class="t" style="left:277.65px;top:71.50px;font-size:12px;line-height:18px;color:#d2d5da;letter-spacing:-0.241px;-webkit-text-stroke:0.2px currentColor;">296 MB</div><div class="t" style="left:343.65px;top:71.50px;font-size:12px;line-height:18px;color:#d2d5da;letter-spacing:-0.241px;-webkit-text-stroke:0.2px currentColor;">313 MB</div><div class="t" style="left:409.45px;top:71.50px;font-size:12px;line-height:18px;color:#d2d5da;letter-spacing:-0.241px;-webkit-text-stroke:0.2px currentColor;">305 MB</div><div class="t" style="left:476.71px;top:71.50px;font-size:12px;line-height:18px;color:#d2d5da;letter-spacing:-0.236px;-webkit-text-stroke:0.2px currentColor;">311 MB</div><div class="b" style="left:0px;top:93.5px;width:553.8333333333334px;height:25px;background:#191b1f;"></div><div class="t" style="left:298.66px;top:-0.60px;font-size:12px;line-height:18px;color:#33a2e5;letter-spacing:-0.097px;-webkit-text-stroke:0.45px currentColor;">min</div><div class="t" style="left:361.36px;top:-0.60px;font-size:12px;line-height:18px;color:#33a2e5;letter-spacing:-0.113px;-webkit-text-stroke:0.45px currentColor;">max</div><div class="t" style="left:430.45px;top:-0.60px;font-size:12px;line-height:18px;color:#33a2e5;letter-spacing:-0.097px;-webkit-text-stroke:0.45px currentColor;">avg</div><div class="t" style="left:479.13px;top:-0.60px;font-size:12px;line-height:18px;color:#33a2e5;letter-spacing:-0.080px;-webkit-text-stroke:0.45px currentColor;">current</div></div>
<div class="b" style="left:596.7333333333333px;top:536.1px;width:7.6px;height:60.5px;background:rgba(72,74,88,0.72);border-radius:4px;"></div>
<div class="b" style="left:621.33px;top:304px;width:537.3333333333334px;height:334px;background:#141619;border:1px solid #202226;box-sizing:border-box;border-radius:3px;"></div>
<div class="t" style="left:803.44px;top:309.00px;font-size:14px;line-height:21px;color:#cfd5dd;letter-spacing:-0.110px;-webkit-text-stroke:0.7px currentColor;">jvm_memory_heap_used</div>
<svg class="b" style="left:621.33px;top:304px;" width="538" height="334" viewBox="0 0 538 334"><path d="M55.0 46.5H511.8M55.0 85.5H511.8M55.0 124.5H511.8M55.0 163.5H511.8M55.0 202.5H511.8M91.5 46.2V202.2M152.5 46.2V202.2M213.5 46.2V202.2M274.5 46.2V202.2M335.5 46.2V202.2M396.5 46.2V202.2M457.5 46.2V202.2" stroke="rgba(200,200,200,0.22)" stroke-width="1" fill="none" shape-rendering="crispEdges"/><defs><clipPath id="c621_304"><rect x="55.0" y="44.2" width="456.8" height="158.5"/></clipPath></defs><g clip-path="url(#c621_304)"><polygon points="45.84,202.70 45.84,165.70 61.09,163.98 76.35,164.29 91.60,168.19 106.86,168.19 122.11,167.33 137.37,167.33 152.62,156.65 167.88,156.18 183.13,153.37 198.38,153.37 213.64,162.89 228.90,162.89 244.15,160.55 259.41,160.55 274.66,165.31 289.92,165.31 305.17,162.50 320.43,162.03 335.68,153.37 350.94,153.37 366.19,150.33 381.45,150.33 396.70,156.34 411.96,156.34 427.21,162.81 442.47,162.81 457.72,159.92 472.98,159.92 488.23,153.37 503.49,153.37 503.49,202.70" fill="#7EB26D" fill-opacity="0.1"/><polygon points="45.84,202.70 45.84,154.23 61.09,154.23 76.35,150.72 91.60,150.72 106.86,150.72 122.11,150.72 137.37,152.83 152.62,152.83 167.88,159.69 183.13,159.69 198.38,158.68 213.64,158.68 228.90,158.99 244.15,158.99 259.41,160.55 274.66,160.47 289.92,162.03 305.17,162.03 320.43,159.61 335.68,159.61 350.94,160.70 366.19,160.70 381.45,155.48 396.70,155.48 411.96,151.81 427.21,151.81 442.47,152.59 457.72,152.59 472.98,154.70 488.23,154.70 503.49,147.83 503.49,202.70" fill="#EAB839" fill-opacity="0.1"/><polygon points="45.84,202.70 45.84,62.58 61.09,62.27 76.35,58.99 91.60,58.99 106.86,58.99 122.11,58.99 137.37,62.81 152.62,62.81 167.88,61.10 183.13,61.10 198.38,59.30 213.64,59.30 228.90,53.06 244.15,53.06 259.41,58.06 274.66,57.82 289.92,58.21 305.17,58.21 320.43,56.26 335.68,56.26 350.94,49.32 366.19,49.32 381.45,52.52 396.70,52.52 411.96,49.79 427.21,49.79 442.47,50.10 457.72,50.10 472.98,48.62 488.23,48.62 503.49,51.11 503.49,202.70" fill="#6ED0E0" fill-opacity="0.1"/><polygon points="45.84,202.70 45.84,69.60 61.09,61.80 76.35,61.80 91.60,63.91 106.86,63.91 122.11,69.44 137.37,69.44 152.62,61.80 167.88,62.27 183.13,65.54 198.38,65.54 213.64,65.54 228.90,65.70 244.15,66.95 259.41,66.95 274.66,62.50 289.92,62.50 305.17,62.11 320.43,62.11 335.68,67.65 350.94,67.65 366.19,62.27 381.45,62.50 396.70,63.28 411.96,63.28 427.21,63.59 442.47,63.59 457.72,68.51 472.98,68.51 488.23,60.71 503.49,60.71 503.49,202.70" fill="#EF843C" fill-opacity="0.1"/><polygon points="45.84,202.70 45.84,166.32 61.09,166.63 76.35,165.93 91.60,165.93 106.86,166.63 122.11,166.40 137.37,162.50 152.62,162.50 167.88,159.85 183.13,159.85 198.38,161.87 213.64,161.87 228.90,161.25 244.15,160.78 259.41,158.68 274.66,158.29 289.92,162.03 305.17,162.03 320.43,160.86 335.68,161.17 350.94,163.36 366.19,163.36 381.45,157.66 396.70,157.66 411.96,161.56 427.21,161.56 442.47,158.29 457.72,158.29 472.98,157.97 488.23,157.97 503.49,164.92 503.49,202.70" fill="#E24D42" fill-opacity="0.1"/><polyline points="45.84,165.70 61.09,163.98 76.35,164.29 91.60,168.19 106.86,168.19 122.11,167.33 137.37,167.33 152.62,156.65 167.88,156.18 183.13,153.37 198.38,153.37 213.64,162.89 228.90,162.89 244.15,160.55 259.41,160.55 274.66,165.31 289.92,165.31 305.17,162.50 320.43,162.03 335.68,153.37 350.94,153.37 366.19,150.33 381.45,150.33 396.70,156.34 411.96,156.34 427.21,162.81 442.47,162.81 457.72,159.92 472.98,159.92 488.23,153.37 503.49,153.37" fill="none" stroke="#7EB26D" stroke-width="1.3" stroke-opacity="0.84" stroke-linejoin="round"/><polyline points="45.84,154.23 61.09,154.23 76.35,150.72 91.60,150.72 106.86,150.72 122.11,150.72 137.37,152.83 152.62,152.83 167.88,159.69 183.13,159.69 198.38,158.68 213.64,158.68 228.90,158.99 244.15,158.99 259.41,160.55 274.66,160.47 289.92,162.03 305.17,162.03 320.43,159.61 335.68,159.61 350.94,160.70 366.19,160.70 381.45,155.48 396.70,155.48 411.96,151.81 427.21,151.81 442.47,152.59 457.72,152.59 472.98,154.70 488.23,154.70 503.49,147.83" fill="none" stroke="#EAB839" stroke-width="1.3" stroke-opacity="0.84" stroke-linejoin="round"/><polyline points="45.84,62.58 61.09,62.27 76.35,58.99 91.60,58.99 106.86,58.99 122.11,58.99 137.37,62.81 152.62,62.81 167.88,61.10 183.13,61.10 198.38,59.30 213.64,59.30 228.90,53.06 244.15,53.06 259.41,58.06 274.66,57.82 289.92,58.21 305.17,58.21 320.43,56.26 335.68,56.26 350.94,49.32 366.19,49.32 381.45,52.52 396.70,52.52 411.96,49.79 427.21,49.79 442.47,50.10 457.72,50.10 472.98,48.62 488.23,48.62 503.49,51.11" fill="none" stroke="#6ED0E0" stroke-width="1.3" stroke-opacity="0.84" stroke-linejoin="round"/><polyline points="45.84,69.60 61.09,61.80 76.35,61.80 91.60,63.91 106.86,63.91 122.11,69.44 137.37,69.44 152.62,61.80 167.88,62.27 183.13,65.54 198.38,65.54 213.64,65.54 228.90,65.70 244.15,66.95 259.41,66.95 274.66,62.50 289.92,62.50 305.17,62.11 320.43,62.11 335.68,67.65 350.94,67.65 366.19,62.27 381.45,62.50 396.70,63.28 411.96,63.28 427.21,63.59 442.47,63.59 457.72,68.51 472.98,68.51 488.23,60.71 503.49,60.71" fill="none" stroke="#EF843C" stroke-width="1.3" stroke-opacity="0.84" stroke-linejoin="round"/><polyline points="45.84,166.32 61.09,166.63 76.35,165.93 91.60,165.93 106.86,166.63 122.11,166.40 137.37,162.50 152.62,162.50 167.88,159.85 183.13,159.85 198.38,161.87 213.64,161.87 228.90,161.25 244.15,160.78 259.41,158.68 274.66,158.29 289.92,162.03 305.17,162.03 320.43,160.86 335.68,161.17 350.94,163.36 366.19,163.36 381.45,157.66 396.70,157.66 411.96,161.56 427.21,161.56 442.47,158.29 457.72,158.29 472.98,157.97 488.23,157.97 503.49,164.92" fill="none" stroke="#E24D42" stroke-width="1.3" stroke-opacity="0.84" stroke-linejoin="round"/></g></svg>
<div class="t" style="left:631.22px;top:340.80px;font-size:12px;line-height:18px;color:#c7d0d9;letter-spacing:-0.310px;-webkit-text-stroke:0.2px currentColor;">200 MB</div>
<div class="t" style="left:631.22px;top:379.80px;font-size:12px;line-height:18px;color:#c7d0d9;letter-spacing:-0.310px;-webkit-text-stroke:0.2px currentColor;">150 MB</div>
<div class="t" style="left:631.22px;top:418.80px;font-size:12px;line-height:18px;color:#c7d0d9;letter-spacing:-0.310px;-webkit-text-stroke:0.2px currentColor;">100 MB</div>
<div class="t" style="left:637.60px;top:457.80px;font-size:12px;line-height:18px;color:#c7d0d9;letter-spacing:-0.312px;-webkit-text-stroke:0.2px currentColor;">50 MB</div>
<div class="t" style="left:653.56px;top:496.80px;font-size:12px;line-height:18px;color:#c7d0d9;letter-spacing:-0.270px;-webkit-text-stroke:0.2px currentColor;">0 B</div>
<div class="t" style="left:698.40px;top:510.00px;font-size:12px;line-height:18px;color:#c7d0d9;letter-spacing:-0.240px;-webkit-text-stroke:0.2px currentColor;">17:36</div>
<div class="t" style="left:759.42px;top:510.00px;font-size:12px;line-height:18px;color:#c7d0d9;letter-spacing:-0.240px;-webkit-text-stroke:0.2px currentColor;">17:38</div>
<div class="t" style="left:820.44px;top:510.00px;font-size:12px;line-height:18px;color:#c7d0d9;letter-spacing:-0.240px;-webkit-text-stroke:0.2px currentColor;">17:40</div>
<div class="t" style="left:881.46px;top:510.00px;font-size:12px;line-height:18px;color:#c7d0d9;letter-spacing:-0.240px;-webkit-text-stroke:0.2px currentColor;">17:42</div>
<div class="t" style="left:942.48px;top:510.00px;font-size:12px;line-height:18px;color:#c7d0d9;letter-spacing:-0.240px;-webkit-text-stroke:0.2px currentColor;">17:44</div>
<div class="t" style="left:1003.50px;top:510.00px;font-size:12px;line-height:18px;color:#c7d0d9;letter-spacing:-0.240px;-webkit-text-stroke:0.2px currentColor;">17:46</div>
<div class="t" style="left:1064.52px;top:510.00px;font-size:12px;line-height:18px;color:#c7d0d9;letter-spacing:-0.240px;-webkit-text-stroke:0.2px currentColor;">17:48</div>
<div class="b" style="left:635.3px;top:533.7px;width:513.8px;height:95.5px;overflow:hidden;"><div class="b" style="left:12.5px;top:29.8px;width:11.3px;height:1.5px;background:#7EB26D;opacity:0.82;"></div><div class="t" style="left:33.10px;top:21.50px;font-size:12px;line-height:18px;color:#d2d5da;letter-spacing:-0.043px;-webkit-text-stroke:0.2px currentColor;">messaging-service-7bc654b676-sdmnk</div><div class="t" style="left:284.09px;top:21.50px;font-size:12px;line-height:18px;color:#d2d5da;letter-spacing:-0.243px;-webkit-text-stroke:0.2px currentColor;">43 MB</div><div class="t" style="left:350.09px;top:21.50px;font-size:12px;line-height:18px;color:#d2d5da;letter-spacing:-0.243px;-webkit-text-stroke:0.2px currentColor;">66 MB</div><div class="t" style="left:415.89px;top:21.50px;font-size:12px;line-height:18px;color:#d2d5da;letter-spacing:-0.243px;-webkit-text-stroke:0.2px currentColor;">54 MB</div><div class="t" style="left:482.29px;top:21.50px;font-size:12px;line-height:18px;color:#d2d5da;letter-spacing:-0.243px;-webkit-text-stroke:0.2px currentColor;">62 MB</div><div class="b" style="left:0px;top:43.5px;width:553.8333333333334px;height:25px;background:#191b1f;"></div><div class="b" style="left:12.5px;top:54.8px;width:11.3px;height:1.5px;background:#EAB839;opacity:0.82;"></div><div class="t" style="left:33.10px;top:46.50px;font-size:12px;line-height:18px;color:#d2d5da;letter-spacing:-0.042px;-webkit-text-stroke:0.2px currentColor;">messaging-service-7bc654b676-js6w7</div><div class="t" style="left:284.09px;top:46.50px;font-size:12px;line-height:18px;color:#d2d5da;letter-spacing:-0.243px;-webkit-text-stroke:0.2px currentColor;">51 MB</div><div class="t" style="left:350.09px;top:46.50px;font-size:12px;line-height:18px;color:#d2d5da;letter-spacing:-0.243px;-webkit-text-stroke:0.2px currentColor;">69 MB</div><div class="t" style="left:415.89px;top:46.50px;font-size:12px;line-height:18px;color:#d2d5da;letter-spacing:-0.243px;-webkit-text-stroke:0.2px currentColor;">59 MB</div><div class="t" style="left:482.29px;top:46.50px;font-size:12px;line-height:18px;color:#d2d5da;letter-spacing:-0.243px;-webkit-text-stroke:0.2px currentColor;">69 MB</div><div class="b" style="left:12.5px;top:79.8px;width:11.3px;height:1.5px;background:#6ED0E0;opacity:0.82;"></div><div class="t" style="left:33.10px;top:71.50px;font-size:12px;line-height:18px;color:#d2d5da;letter-spacing:-0.041px;-webkit-text-stroke:0.2px currentColor;">messaging-service-7bc654b676-25jlr</div><div class="t" style="left:277.65px;top:71.50px;font-size:12px;line-height:18px;color:#d2d5da;letter-spacing:-0.241px;-webkit-text-stroke:0.2px currentColor;">178 MB</div><div class="t" style="left:343.65px;top:71.50px;font-size:12px;line-height:18px;color:#d2d5da;letter-spacing:-0.241px;-webkit-text-stroke:0.2px currentColor;">196 MB</div><div class="t" style="left:409.45px;top:71.50px;font-size:12px;line-height:18px;color:#d2d5da;letter-spacing:-0.241px;-webkit-text-stroke:0.2px currentColor;">187 MB</div><div class="t" style="left:475.85px;top:71.50px;font-size:12px;line-height:18px;color:#d2d5da;letter-spacing:-0.241px;-webkit-text-stroke:0.2px currentColor;">193 MB</div><div class="b" style="left:0px;top:93.5px;width:553.8333333333334px;height:25px;background:#191b1f;"></div><div class="t" style="left:298.66px;top:-0.60px;font-size:12px;line-height:18px;color:#33a2e5;letter-spacing:-0.097px;-webkit-text-stroke:0.45px currentColor;">min</div><div class="t" style="left:361.36px;top:-0.60px;font-size:12px;line-height:18px;color:#33a2e5;letter-spacing:-0.113px;-webkit-text-stroke:0.45px currentColor;">max</div><div class="t" style="left:430.45px;top:-0.60px;font-size:12px;line-height:18px;color:#33a2e5;letter-spacing:-0.097px;-webkit-text-stroke:0.45px currentColor;">avg</div><div class="t" style="left:479.13px;top:-0.60px;font-size:12px;line-height:18px;color:#33a2e5;letter-spacing:-0.080px;-webkit-text-stroke:0.45px currentColor;">current</div></div>
<div class="b" style="left:1142.0633333333335px;top:536.1px;width:7.6px;height:60.5px;background:rgba(72,74,88,0.72);border-radius:4px;"></div>
<div class="b" style="left:1166.67px;top:304px;width:537.3333333333334px;height:334px;background:#141619;border:1px solid #202226;box-sizing:border-box;border-radius:3px;"></div>
<div class="t" style="left:1333.77px;top:309.00px;font-size:14px;line-height:21px;color:#cfd5dd;letter-spacing:-0.139px;-webkit-text-stroke:0.7px currentColor;">jvm_memory_non_heap_used</div>
<svg class="b" style="left:1166.67px;top:304px;" width="538" height="334" viewBox="0 0 538 334"><path d="M55.0 46.5H511.8M55.0 85.5H511.8M55.0 124.5H511.8M55.0 163.5H511.8M55.0 202.5H511.8M91.5 46.2V202.2M152.5 46.2V202.2M213.5 46.2V202.2M274.5 46.2V202.2M335.5 46.2V202.2M396.5 46.2V202.2M457.5 46.2V202.2" stroke="rgba(200,200,200,0.22)" stroke-width="1" fill="none" shape-rendering="crispEdges"/><defs><clipPath id="c1166_304"><rect x="55.0" y="44.2" width="456.8" height="158.5"/></clipPath></defs><g clip-path="url(#c1166_304)"><polygon points="45.83,202.70 45.83,174.51 61.09,174.41 76.34,174.31 91.60,174.22 106.86,174.12 122.11,173.34 137.37,172.95 152.62,172.56 167.88,172.41 183.13,172.27 198.38,172.12 213.64,171.98 228.89,171.73 244.15,171.49 259.40,171.24 274.66,171.00 289.91,170.85 305.17,170.71 320.42,170.56 335.68,170.41 350.93,170.41 366.19,167.29 381.44,166.22 396.70,165.15 411.95,165.15 427.21,142.92 442.46,142.92 457.72,164.76 472.97,164.56 488.23,164.37 503.48,163.98 503.48,202.70" fill="#7EB26D" fill-opacity="0.1"/><polygon points="45.83,202.70 45.83,162.42 61.09,162.16 76.34,161.90 91.60,161.64 106.86,161.05 122.11,160.47 137.37,159.88 152.62,159.30 167.88,158.13 183.13,158.00 198.38,157.87 213.64,157.74 228.89,157.48 244.15,157.22 259.40,156.96 274.66,156.80 289.91,156.65 305.17,156.49 320.42,156.34 335.68,156.18 350.93,155.40 366.19,155.14 381.44,154.88 396.70,154.62 411.95,154.23 427.21,153.84 442.46,153.76 457.72,153.68 472.97,153.61 488.23,153.53 503.48,153.45 503.48,202.70" fill="#EAB839" fill-opacity="0.1"/><polygon points="45.83,202.70 45.83,57.12 61.09,57.12 76.34,57.12 91.60,57.12 106.86,57.12 122.11,57.12 137.37,57.12 152.62,57.12 167.88,57.12 183.13,57.12 198.38,57.12 213.64,57.12 228.89,57.12 244.15,57.12 259.40,57.12 274.66,57.12 289.91,57.12 305.17,57.12 320.42,57.12 335.68,57.12 350.93,57.12 366.19,57.12 381.44,57.12 396.70,57.12 411.95,57.12 427.21,57.12 442.46,57.12 457.72,57.12 472.97,57.12 488.23,57.12 503.48,57.12 503.48,202.70" fill="#6ED0E0" fill-opacity="0.1"/><polygon points="45.83,202.70 45.83,66.09 61.09,66.09 76.34,66.09 91.60,66.09 106.86,66.09 122.11,66.09 137.37,66.09 152.62,66.09 167.88,66.09 183.13,66.09 198.38,66.09 213.64,66.09 228.89,66.09 244.15,66.09 259.40,66.09 274.66,66.09 289.91,66.09 305.17,66.09 320.42,66.09 335.68,66.09 350.93,66.09 366.19,66.09 381.44,66.09 396.70,66.09 411.95,66.09 427.21,66.09 442.46,66.09 457.72,66.09 472.97,66.09 488.23,66.09 503.48,66.09 503.48,202.70" fill="#EF843C" fill-opacity="0.1"/><polygon points="45.83,202.70 45.83,172.95 61.09,172.17 76.34,171.39 91.60,171.39 106.86,171.39 122.11,171.39 137.37,171.39 152.62,171.39 167.88,171.19 183.13,171.00 198.38,170.81 213.64,170.61 228.89,170.41 244.15,170.22 259.40,168.66 274.66,168.27 289.91,168.03 305.17,167.78 320.42,167.54 335.68,167.29 350.93,167.00 366.19,166.71 381.44,166.32 396.70,165.93 411.95,165.93 427.21,165.93 442.46,165.54 457.72,165.15 472.97,164.76 488.23,164.37 503.48,161.25 503.48,202.70" fill="#E24D42" fill-opacity="0.1"/><polyline points="45.83,174.51 61.09,174.41 76.34,174.31 91.60,174.22 106.86,174.12 122.11,173.34 137.37,172.95 152.62,172.56 167.88,172.41 183.13,172.27 198.38,172.12 213.64,171.98 228.89,171.73 244.15,171.49 259.40,171.24 274.66,171.00 289.91,170.85 305.17,170.71 320.42,170.56 335.68,170.41 350.93,170.41 366.19,167.29 381.44,166.22 396.70,165.15 411.95,165.15 427.21,142.92 442.46,142.92 457.72,164.76 472.97,164.56 488.23,164.37 503.48,163.98" fill="none" stroke="#7EB26D" stroke-width="1.3" stroke-opacity="0.84" stroke-linejoin="round"/><polyline points="45.83,162.42 61.09,162.16 76.34,161.90 91.60,161.64 106.86,161.05 122.11,160.47 137.37,159.88 152.62,159.30 167.88,158.13 183.13,158.00 198.38,157.87 213.64,157.74 228.89,157.48 244.15,157.22 259.40,156.96 274.66,156.80 289.91,156.65 305.17,156.49 320.42,156.34 335.68,156.18 350.93,155.40 366.19,155.14 381.44,154.88 396.70,154.62 411.95,154.23 427.21,153.84 442.46,153.76 457.72,153.68 472.97,153.61 488.23,153.53 503.48,153.45" fill="none" stroke="#EAB839" stroke-width="1.3" stroke-opacity="0.84" stroke-linejoin="round"/><polyline points="45.83,57.12 61.09,57.12 76.34,57.12 91.60,57.12 106.86,57.12 122.11,57.12 137.37,57.12 152.62,57.12 167.88,57.12 183.13,57.12 198.38,57.12 213.64,57.12 228.89,57.12 244.15,57.12 259.40,57.12 274.66,57.12 289.91,57.12 305.17,57.12 320.42,57.12 335.68,57.12 350.93,57.12 366.19,57.12 381.44,57.12 396.70,57.12 411.95,57.12 427.21,57.12 442.46,57.12 457.72,57.12 472.97,57.12 488.23,57.12 503.48,57.12" fill="none" stroke="#6ED0E0" stroke-width="1.3" stroke-opacity="0.84" stroke-linejoin="round"/><polyline points="45.83,66.09 61.09,66.09 76.34,66.09 91.60,66.09 106.86,66.09 122.11,66.09 137.37,66.09 152.62,66.09 167.88,66.09 183.13,66.09 198.38,66.09 213.64,66.09 228.89,66.09 244.15,66.09 259.40,66.09 274.66,66.09 289.91,66.09 305.17,66.09 320.42,66.09 335.68,66.09 350.93,66.09 366.19,66.09 381.44,66.09 396.70,66.09 411.95,66.09 427.21,66.09 442.46,66.09 457.72,66.09 472.97,66.09 488.23,66.09 503.48,66.09" fill="none" stroke="#EF843C" stroke-width="1.3" stroke-opacity="0.84" stroke-linejoin="round"/><polyline points="45.83,172.95 61.09,172.17 76.34,171.39 91.60,171.39 106.86,171.39 122.11,171.39 137.37,171.39 152.62,171.39 167.88,171.19 183.13,171.00 198.38,170.81 213.64,170.61 228.89,170.41 244.15,170.22 259.40,168.66 274.66,168.27 289.91,168.03 305.17,167.78 320.42,167.54 335.68,167.29 350.93,167.00 366.19,166.71 381.44,166.32 396.70,165.93 411.95,165.93 427.21,165.93 442.46,165.54 457.72,165.15 472.97,164.76 488.23,164.37 503.48,161.25" fill="none" stroke="#E24D42" stroke-width="1.3" stroke-opacity="0.84" stroke-linejoin="round"/></g></svg>
<div class="t" style="left:1176.56px;top:340.80px;font-size:12px;line-height:18px;color:#c7d0d9;letter-spacing:-0.310px;-webkit-text-stroke:0.2px currentColor;">120 MB</div>
<div class="t" style="left:1177.42px;top:379.80px;font-size:12px;line-height:18px;color:#c7d0d9;letter-spacing:-0.303px;-webkit-text-stroke:0.2px currentColor;">110 MB</div>
<div class="t" style="left:1176.56px;top:418.80px;font-size:12px;line-height:18px;color:#c7d0d9;letter-spacing:-0.310px;-webkit-text-stroke:0.2px currentColor;">100 MB</div>
<div class="t" style="left:1182.94px;top:457.80px;font-size:12px;line-height:18px;color:#c7d0d9;letter-spacing:-0.312px;-webkit-text-stroke:0.2px currentColor;">90 MB</div>
<div class="t" style="left:1182.94px;top:496.80px;font-size:12px;line-height:18px;color:#c7d0d9;letter-spacing:-0.312px;-webkit-text-stroke:0.2px currentColor;">80 MB</div>
<div class="t" style="left:1243.74px;top:510.00px;font-size:12px;line-height:18px;color:#c7d0d9;letter-spacing:-0.240px;-webkit-text-stroke:0.2px currentColor;">17:36</div>
<div class="t" style="left:1304.76px;top:510.00px;font-size:12px;line-height:18px;color:#c7d0d9;letter-spacing:-0.240px;-webkit-text-stroke:0.2px currentColor;">17:38</div>
<div class="t" style="left:1365.78px;top:510.00px;font-size:12px;line-height:18px;color:#c7d0d9;letter-spacing:-0.240px;-webkit-text-stroke:0.2px currentColor;">17:40</div>
<div class="t" style="left:1426.80px;top:510.00px;font-size:12px;line-height:18px;color:#c7d0d9;letter-spacing:-0.240px;-webkit-text-stroke:0.2px currentColor;">17:42</div>
<div class="t" style="left:1487.82px;top:510.00px;font-size:12px;line-height:18px;color:#c7d0d9;letter-spacing:-0.240px;-webkit-text-stroke:0.2px currentColor;">17:44</div>
<div class="t" style="left:1548.84px;top:510.00px;font-size:12px;line-height:18px;color:#c7d0d9;letter-spacing:-0.240px;-webkit-text-stroke:0.2px currentColor;">17:46</div>
<div class="t" style="left:1609.86px;top:510.00px;font-size:12px;line-height:18px;color:#c7d0d9;letter-spacing:-0.240px;-webkit-text-stroke:0.2px currentColor;">17:48</div>
<div class="b" style="left:1180.7px;top:533.7px;width:513.8px;height:95.5px;overflow:hidden;"><div class="b" style="left:12.5px;top:29.8px;width:11.3px;height:1.5px;background:#7EB26D;opacity:0.82;"></div><div class="t" style="left:33.10px;top:21.50px;font-size:12px;line-height:18px;color:#d2d5da;letter-spacing:-0.043px;-webkit-text-stroke:0.2px currentColor;">messaging-service-7bc654b676-sdmnk</div><div class="t" style="left:284.09px;top:21.50px;font-size:12px;line-height:18px;color:#d2d5da;letter-spacing:-0.243px;-webkit-text-stroke:0.2px currentColor;">87 MB</div><div class="t" style="left:350.09px;top:21.50px;font-size:12px;line-height:18px;color:#d2d5da;letter-spacing:-0.243px;-webkit-text-stroke:0.2px currentColor;">95 MB</div><div class="t" style="left:415.89px;top:21.50px;font-size:12px;line-height:18px;color:#d2d5da;letter-spacing:-0.243px;-webkit-text-stroke:0.2px currentColor;">89 MB</div><div class="t" style="left:482.29px;top:21.50px;font-size:12px;line-height:18px;color:#d2d5da;letter-spacing:-0.243px;-webkit-text-stroke:0.2px currentColor;">90 MB</div><div class="b" style="left:0px;top:43.5px;width:553.8333333333334px;height:25px;background:#191b1f;"></div><div class="b" style="left:12.5px;top:54.8px;width:11.3px;height:1.5px;background:#EAB839;opacity:0.82;"></div><div class="t" style="left:33.10px;top:46.50px;font-size:12px;line-height:18px;color:#d2d5da;letter-spacing:-0.042px;-webkit-text-stroke:0.2px currentColor;">messaging-service-7bc654b676-js6w7</div><div class="t" style="left:284.09px;top:46.50px;font-size:12px;line-height:18px;color:#d2d5da;letter-spacing:-0.243px;-webkit-text-stroke:0.2px currentColor;">90 MB</div><div class="t" style="left:350.09px;top:46.50px;font-size:12px;line-height:18px;color:#d2d5da;letter-spacing:-0.243px;-webkit-text-stroke:0.2px currentColor;">92 MB</div><div class="t" style="left:415.89px;top:46.50px;font-size:12px;line-height:18px;color:#d2d5da;letter-spacing:-0.243px;-webkit-text-stroke:0.2px currentColor;">92 MB</div><div class="t" style="left:482.29px;top:46.50px;font-size:12px;line-height:18px;color:#d2d5da;letter-spacing:-0.243px;-webkit-text-stroke:0.2px currentColor;">92 MB</div><div class="b" style="left:12.5px;top:79.8px;width:11.3px;height:1.5px;background:#6ED0E0;opacity:0.82;"></div><div class="t" style="left:33.10px;top:71.50px;font-size:12px;line-height:18px;color:#d2d5da;letter-spacing:-0.041px;-webkit-text-stroke:0.2px currentColor;">messaging-service-7bc654b676-25jlr</div><div class="t" style="left:278.51px;top:71.50px;font-size:12px;line-height:18px;color:#d2d5da;letter-spacing:-0.236px;-webkit-text-stroke:0.2px currentColor;">117 MB</div><div class="t" style="left:344.51px;top:71.50px;font-size:12px;line-height:18px;color:#d2d5da;letter-spacing:-0.236px;-webkit-text-stroke:0.2px currentColor;">117 MB</div><div class="t" style="left:410.31px;top:71.50px;font-size:12px;line-height:18px;color:#d2d5da;letter-spacing:-0.236px;-webkit-text-stroke:0.2px currentColor;">117 MB</div><div class="t" style="left:476.71px;top:71.50px;font-size:12px;line-height:18px;color:#d2d5da;letter-spacing:-0.236px;-webkit-text-stroke:0.2px currentColor;">117 MB</div><div class="b" style="left:0px;top:93.5px;width:553.8333333333334px;height:25px;background:#191b1f;"></div><div class="t" style="left:298.66px;top:-0.60px;font-size:12px;line-height:18px;color:#33a2e5;letter-spacing:-0.097px;-webkit-text-stroke:0.45px currentColor;">min</div><div class="t" style="left:361.36px;top:-0.60px;font-size:12px;line-height:18px;color:#33a2e5;letter-spacing:-0.113px;-webkit-text-stroke:0.45px currentColor;">max</div><div class="t" style="left:430.45px;top:-0.60px;font-size:12px;line-height:18px;color:#33a2e5;letter-spacing:-0.097px;-webkit-text-stroke:0.45px currentColor;">avg</div><div class="t" style="left:479.13px;top:-0.60px;font-size:12px;line-height:18px;color:#33a2e5;letter-spacing:-0.080px;-webkit-text-stroke:0.45px currentColor;">current</div></div>
<div class="b" style="left:1687.4033333333336px;top:536.1px;width:7.6px;height:60.5px;background:rgba(72,74,88,0.72);border-radius:4px;"></div>
<div class="b" style="left:76.0px;top:684px;width:810.0px;height:296px;background:#141619;border:1px solid #202226;box-sizing:border-box;border-radius:3px;"></div>
<div class="t" style="left:412.76px;top:689.00px;font-size:14px;line-height:21px;color:#cfd5dd;letter-spacing:0.012px;-webkit-text-stroke:0.7px currentColor;">jvm_threads_count</div>
<svg class="b" style="left:76.0px;top:684px;" width="810" height="296" viewBox="0 0 810 296"><path d="M38.0 46.5H785.2M38.0 72.5H785.2M38.0 99.5H785.2M38.0 125.5H785.2M38.0 151.5H785.2M38.0 178.5H785.2M97.5 46.3V178.3M197.5 46.3V178.3M296.5 46.3V178.3M396.5 46.3V178.3M496.5 46.3V178.3M595.5 46.3V178.3M695.5 46.3V178.3" stroke="rgba(200,200,200,0.22)" stroke-width="1" fill="none" shape-rendering="crispEdges"/><defs><clipPath id="c76_684"><rect x="38.0" y="44.3" width="747.2" height="134.5"/></clipPath></defs><g clip-path="url(#c76_684)"><polygon points="22.86,178.80 22.86,120.22 47.77,120.22 72.69,120.22 97.60,130.78 122.51,130.78 147.43,120.22 172.34,120.22 197.25,120.22 222.16,120.22 247.08,120.22 271.99,120.22 296.90,120.22 321.81,120.22 346.73,130.78 371.64,130.78 396.55,120.22 421.46,120.22 446.38,120.22 471.29,120.22 496.20,130.78 521.11,130.78 546.02,120.22 570.94,120.22 595.85,120.22 620.76,120.22 645.68,120.22 670.59,120.22 695.50,130.78 720.41,130.78 745.33,120.22 770.24,120.22 770.24,178.80" fill="#7EB26D" fill-opacity="0.1"/><polygon points="22.86,178.80 22.86,109.66 47.77,109.66 72.69,99.10 97.60,99.10 122.51,99.10 147.43,99.10 172.34,99.10 197.25,99.10 222.16,109.66 247.08,109.66 271.99,99.10 296.90,99.10 321.81,109.66 346.73,109.66 371.64,99.10 396.55,99.10 421.46,99.10 446.38,99.10 471.29,109.66 496.20,109.66 521.11,99.10 546.02,99.10 570.94,88.54 595.85,88.54 620.76,88.54 645.68,88.54 670.59,88.54 695.50,88.54 720.41,88.54 745.33,88.54 770.24,88.54 770.24,178.80" fill="#EAB839" fill-opacity="0.1"/><polygon points="22.86,178.80 22.86,88.54 47.77,88.54 72.69,88.54 97.60,88.54 122.51,88.54 147.43,88.54 172.34,99.10 197.25,99.10 222.16,77.98 247.08,77.98 271.99,88.54 296.90,88.54 321.81,77.98 346.73,77.98 371.64,88.54 396.55,88.54 421.46,88.54 446.38,88.54 471.29,88.54 496.20,88.54 521.11,99.10 546.02,99.10 570.94,88.54 595.85,88.54 620.76,88.54 645.68,88.54 670.59,99.10 695.50,99.10 720.41,88.54 745.33,88.54 770.24,88.54 770.24,178.80" fill="#6ED0E0" fill-opacity="0.1"/><polygon points="22.86,178.80 22.86,99.10 47.77,109.66 72.69,109.66 97.60,99.10 122.51,99.10 147.43,99.10 172.34,99.10 197.25,99.10 222.16,99.10 247.08,109.66 271.99,109.66 296.90,99.10 321.81,99.10 346.73,99.10 371.64,99.10 396.55,99.10 421.46,99.10 446.38,99.10 471.29,99.10 496.20,88.54 521.11,88.54 546.02,99.10 570.94,99.10 595.85,109.66 620.76,109.66 645.68,99.10 670.59,99.10 695.50,99.10 720.41,99.10 745.33,99.10 770.24,99.10 770.24,178.80" fill="#EF843C" fill-opacity="0.1"/><polygon points="22.86,178.80 22.86,120.22 47.77,120.22 72.69,130.78 97.60,130.78 122.51,120.22 147.43,120.22 172.34,120.22 197.25,120.22 222.16,130.78 247.08,130.78 271.99,141.34 296.90,141.34 321.81,120.22 346.73,120.22 371.64,120.22 396.55,120.22 421.46,120.22 446.38,120.22 471.29,120.22 496.20,120.22 521.11,130.78 546.02,130.78 570.94,120.22 595.85,120.22 620.76,120.22 645.68,120.22 670.59,109.66 695.50,109.66 720.41,120.22 745.33,120.22 770.24,130.78 770.24,178.80" fill="#E24D42" fill-opacity="0.1"/><polyline points="22.86,120.22 47.77,120.22 72.69,120.22 97.60,130.78 122.51,130.78 147.43,120.22 172.34,120.22 197.25,120.22 222.16,120.22 247.08,120.22 271.99,120.22 296.90,120.22 321.81,120.22 346.73,130.78 371.64,130.78 396.55,120.22 421.46,120.22 446.38,120.22 471.29,120.22 496.20,130.78 521.11,130.78 546.02,120.22 570.94,120.22 595.85,120.22 620.76,120.22 645.68,120.22 670.59,120.22 695.50,130.78 720.41,130.78 745.33,120.22 770.24,120.22" fill="none" stroke="#7EB26D" stroke-width="1.9" stroke-opacity="0.64" stroke-linejoin="round"/><polyline points="22.86,109.66 47.77,109.66 72.69,99.10 97.60,99.10 122.51,99.10 147.43,99.10 172.34,99.10 197.25,99.10 222.16,109.66 247.08,109.66 271.99,99.10 296.90,99.10 321.81,109.66 346.73,109.66 371.64,99.10 396.55,99.10 421.46,99.10 446.38,99.10 471.29,109.66 496.20,109.66 521.11,99.10 546.02,99.10 570.94,88.54 595.85,88.54 620.76,88.54 645.68,88.54 670.59,88.54 695.50,88.54 720.41,88.54 745.33,88.54 770.24,88.54" fill="none" stroke="#EAB839" stroke-width="1.9" stroke-opacity="0.64" stroke-linejoin="round"/><polyline points="22.86,88.54 47.77,88.54 72.69,88.54 97.60,88.54 122.51,88.54 147.43,88.54 172.34,99.10 197.25,99.10 222.16,77.98 247.08,77.98 271.99,88.54 296.90,88.54 321.81,77.98 346.73,77.98 371.64,88.54 396.55,88.54 421.46,88.54 446.38,88.54 471.29,88.54 496.20,88.54 521.11,99.10 546.02,99.10 570.94,88.54 595.85,88.54 620.76,88.54 645.68,88.54 670.59,99.10 695.50,99.10 720.41,88.54 745.33,88.54 770.24,88.54" fill="none" stroke="#6ED0E0" stroke-width="1.9" stroke-opacity="0.64" stroke-linejoin="round"/><polyline points="22.86,99.10 47.77,109.66 72.69,109.66 97.60,99.10 122.51,99.10 147.43,99.10 172.34,99.10 197.25,99.10 222.16,99.10 247.08,109.66 271.99,109.66 296.90,99.10 321.81,99.10 346.73,99.10 371.64,99.10 396.55,99.10 421.46,99.10 446.38,99.10 471.29,99.10 496.20,88.54 521.11,88.54 546.02,99.10 570.94,99.10 595.85,109.66 620.76,109.66 645.68,99.10 670.59,99.10 695.50,99.10 720.41,99.10 745.33,99.10 770.24,99.10" fill="none" stroke="#EF843C" stroke-width="1.9" stroke-opacity="0.64" stroke-linejoin="round"/><polyline points="22.86,120.22 47.77,120.22 72.69,130.78 97.60,130.78 122.51,120.22 147.43,120.22 172.34,120.22 197.25,120.22 222.16,130.78 247.08,130.78 271.99,141.34 296.90,141.34 321.81,120.22 346.73,120.22 371.64,120.22 396.55,120.22 421.46,120.22 446.38,120.22 471.29,120.22 496.20,120.22 521.11,130.78 546.02,130.78 570.94,120.22 595.85,120.22 620.76,120.22 645.68,120.22 670.59,109.66 695.50,109.66 720.41,120.22 745.33,120.22 770.24,130.78" fill="none" stroke="#E24D42" stroke-width="1.9" stroke-opacity="0.64" stroke-linejoin="round"/></g></svg>
<div class="t" style="left:86.13px;top:720.90px;font-size:12px;line-height:18px;color:#c7d0d9;letter-spacing:-0.263px;-webkit-text-stroke:0.2px currentColor;">85.0</div>
<div class="t" style="left:86.13px;top:747.30px;font-size:12px;line-height:18px;color:#c7d0d9;letter-spacing:-0.263px;-webkit-text-stroke:0.2px currentColor;">82.5</div>
<div class="t" style="left:86.13px;top:773.70px;font-size:12px;line-height:18px;color:#c7d0d9;letter-spacing:-0.263px;-webkit-text-stroke:0.2px currentColor;">80.0</div>
<div class="t" style="left:86.13px;top:800.10px;font-size:12px;line-height:18px;color:#c7d0d9;letter-spacing:-0.263px;-webkit-text-stroke:0.2px currentColor;">77.5</div>
<div class="t" style="left:86.13px;top:826.50px;font-size:12px;line-height:18px;color:#c7d0d9;letter-spacing:-0.263px;-webkit-text-stroke:0.2px currentColor;">75.0</div>
<div class="t" style="left:86.13px;top:852.90px;font-size:12px;line-height:18px;color:#c7d0d9;letter-spacing:-0.263px;-webkit-text-stroke:0.2px currentColor;">72.5</div>
<div class="t" style="left:159.07px;top:866.10px;font-size:12px;line-height:18px;color:#c7d0d9;letter-spacing:-0.240px;-webkit-text-stroke:0.2px currentColor;">17:36</div>
<div class="t" style="left:258.72px;top:866.10px;font-size:12px;line-height:18px;color:#c7d0d9;letter-spacing:-0.240px;-webkit-text-stroke:0.2px currentColor;">17:38</div>
<div class="t" style="left:358.37px;top:866.10px;font-size:12px;line-height:18px;color:#c7d0d9;letter-spacing:-0.240px;-webkit-text-stroke:0.2px currentColor;">17:40</div>
<div class="t" style="left:458.02px;top:866.10px;font-size:12px;line-height:18px;color:#c7d0d9;letter-spacing:-0.240px;-webkit-text-stroke:0.2px currentColor;">17:42</div>
<div class="t" style="left:557.67px;top:866.10px;font-size:12px;line-height:18px;color:#c7d0d9;letter-spacing:-0.240px;-webkit-text-stroke:0.2px currentColor;">17:44</div>
<div class="t" style="left:657.32px;top:866.10px;font-size:12px;line-height:18px;color:#c7d0d9;letter-spacing:-0.240px;-webkit-text-stroke:0.2px currentColor;">17:46</div>
<div class="t" style="left:756.97px;top:866.10px;font-size:12px;line-height:18px;color:#c7d0d9;letter-spacing:-0.240px;-webkit-text-stroke:0.2px currentColor;">17:48</div>
<div class="b" style="left:90.0px;top:889.8px;width:786.5px;height:81.4px;overflow:hidden;"><div class="b" style="left:12.5px;top:29.8px;width:11.3px;height:1.5px;background:#7EB26D;opacity:0.82;"></div><div class="t" style="left:33.10px;top:21.50px;font-size:12px;line-height:18px;color:#d2d5da;letter-spacing:-0.043px;-webkit-text-stroke:0.2px currentColor;">messaging-service-7bc654b676-sdmnk</div><div class="t" style="left:631.79px;top:21.50px;font-size:12px;line-height:18px;color:#d2d5da;letter-spacing:-0.234px;-webkit-text-stroke:0.2px currentColor;">77</div><div class="t" style="left:670.89px;top:21.50px;font-size:12px;line-height:18px;color:#d2d5da;letter-spacing:-0.234px;-webkit-text-stroke:0.2px currentColor;">78</div><div class="t" style="left:709.69px;top:21.50px;font-size:12px;line-height:18px;color:#d2d5da;letter-spacing:-0.234px;-webkit-text-stroke:0.2px currentColor;">78</div><div class="t" style="left:758.79px;top:21.50px;font-size:12px;line-height:18px;color:#d2d5da;letter-spacing:-0.234px;-webkit-text-stroke:0.2px currentColor;">78</div><div class="b" style="left:0px;top:43.5px;width:782.0px;height:25px;background:#191b1f;"></div><div class="b" style="left:12.5px;top:54.8px;width:11.3px;height:1.5px;background:#EAB839;opacity:0.82;"></div><div class="t" style="left:33.10px;top:46.50px;font-size:12px;line-height:18px;color:#d2d5da;letter-spacing:-0.042px;-webkit-text-stroke:0.2px currentColor;">messaging-service-7bc654b676-js6w7</div><div class="t" style="left:631.79px;top:46.50px;font-size:12px;line-height:18px;color:#d2d5da;letter-spacing:-0.234px;-webkit-text-stroke:0.2px currentColor;">79</div><div class="t" style="left:670.89px;top:46.50px;font-size:12px;line-height:18px;color:#d2d5da;letter-spacing:-0.234px;-webkit-text-stroke:0.2px currentColor;">81</div><div class="t" style="left:709.69px;top:46.50px;font-size:12px;line-height:18px;color:#d2d5da;letter-spacing:-0.234px;-webkit-text-stroke:0.2px currentColor;">80</div><div class="t" style="left:758.79px;top:46.50px;font-size:12px;line-height:18px;color:#d2d5da;letter-spacing:-0.234px;-webkit-text-stroke:0.2px currentColor;">81</div><div class="b" style="left:12.5px;top:79.8px;width:11.3px;height:1.5px;background:#6ED0E0;opacity:0.82;"></div><div class="t" style="left:33.10px;top:71.50px;font-size:12px;line-height:18px;color:#d2d5da;letter-spacing:-0.041px;-webkit-text-stroke:0.2px currentColor;">messaging-service-7bc654b676-25jlr</div><div class="t" style="left:631.79px;top:71.50px;font-size:12px;line-height:18px;color:#d2d5da;letter-spacing:-0.234px;-webkit-text-stroke:0.2px currentColor;">80</div><div class="t" style="left:670.89px;top:71.50px;font-size:12px;line-height:18px;color:#d2d5da;letter-spacing:-0.234px;-webkit-text-stroke:0.2px currentColor;">82</div><div class="t" style="left:709.69px;top:71.50px;font-size:12px;line-height:18px;color:#d2d5da;letter-spacing:-0.234px;-webkit-text-stroke:0.2px currentColor;">81</div><div class="t" style="left:758.79px;top:71.50px;font-size:12px;line-height:18px;color:#d2d5da;letter-spacing:-0.234px;-webkit-text-stroke:0.2px currentColor;">81</div><div class="b" style="left:0px;top:93.5px;width:782.0px;height:25px;background:#191b1f;"></div><div class="t" style="left:625.76px;top:-0.60px;font-size:12px;line-height:18px;color:#33a2e5;letter-spacing:-0.097px;-webkit-text-stroke:0.45px currentColor;">min</div><div class="t" style="left:661.56px;top:-0.60px;font-size:12px;line-height:18px;color:#33a2e5;letter-spacing:-0.113px;-webkit-text-stroke:0.45px currentColor;">max</div><div class="t" style="left:703.65px;top:-0.60px;font-size:12px;line-height:18px;color:#33a2e5;letter-spacing:-0.097px;-webkit-text-stroke:0.45px currentColor;">avg</div><div class="t" style="left:735.03px;top:-0.60px;font-size:12px;line-height:18px;color:#33a2e5;letter-spacing:-0.080px;-webkit-text-stroke:0.45px currentColor;">current</div></div>
<div class="b" style="left:869.4px;top:892.1999999999999px;width:7.6px;height:44.5px;background:rgba(72,74,88,0.72);border-radius:4px;"></div>
<div class="b" style="left:894.0px;top:684px;width:810.0px;height:296px;background:#141619;border:1px solid #202226;box-sizing:border-box;border-radius:3px;"></div>
<div class="t" style="left:1205.01px;top:689.00px;font-size:14px;line-height:21px;color:#cfd5dd;letter-spacing:0.014px;-webkit-text-stroke:0.7px currentColor;">jvm_threads_waiting_count</div>
<svg class="b" style="left:894.0px;top:684px;" width="810" height="296" viewBox="0 0 810 296"><path d="M37.7 46.5H784.7M37.7 72.5H784.7M37.7 99.5H784.7M37.7 125.5H784.7M37.7 151.5H784.7M37.7 178.5H784.7M98.5 46.3V178.3M197.5 46.3V178.3M297.5 46.3V178.3M396.5 46.3V178.3M496.5 46.3V178.3M595.5 46.3V178.3M695.5 46.3V178.3" stroke="rgba(200,200,200,0.22)" stroke-width="1" fill="none" shape-rendering="crispEdges"/><defs><clipPath id="c894_684"><rect x="37.7" y="44.3" width="747.0" height="134.5"/></clipPath></defs><g clip-path="url(#c894_684)"><polygon points="23.58,178.80 23.58,125.50 48.45,125.50 73.33,125.50 98.20,136.06 123.08,136.06 147.95,146.62 172.83,146.62 197.70,136.06 222.58,136.06 247.45,136.06 272.33,136.06 297.20,136.06 322.08,136.06 346.95,146.62 371.83,146.62 396.70,136.06 421.58,136.06 446.45,136.06 471.33,136.06 496.20,146.62 521.08,146.62 545.95,125.50 570.83,125.50 595.70,146.62 620.58,146.62 645.45,146.62 670.33,146.62 695.20,136.06 720.08,136.06 744.95,136.06 769.83,136.06 769.83,178.80" fill="#7EB26D" fill-opacity="0.1"/><polygon points="23.58,178.80 23.58,114.94 48.45,114.94 73.33,114.94 98.20,114.94 123.08,114.94 147.95,114.94 172.83,104.38 197.70,104.38 222.58,114.94 247.45,114.94 272.33,114.94 297.20,114.94 322.08,125.50 346.95,125.50 371.83,125.50 396.70,125.50 421.58,114.94 446.45,114.94 471.33,104.38 496.20,104.38 521.08,104.38 545.95,104.38 570.83,93.82 595.70,93.82 620.58,93.82 645.45,93.82 670.33,93.82 695.20,93.82 720.08,93.82 744.95,93.82 769.83,93.82 769.83,178.80" fill="#EAB839" fill-opacity="0.1"/><polygon points="23.58,178.80 23.58,83.26 48.45,83.26 73.33,93.82 98.20,93.82 123.08,104.38 147.95,104.38 172.83,104.38 197.70,104.38 222.58,114.94 247.45,114.94 272.33,93.82 297.20,93.82 322.08,104.38 346.95,104.38 371.83,125.50 396.70,125.50 421.58,104.38 446.45,104.38 471.33,104.38 496.20,104.38 521.08,104.38 545.95,104.38 570.83,125.50 595.70,125.50 620.58,114.94 645.45,114.94 670.33,104.38 695.20,104.38 720.08,104.38 744.95,104.38 769.83,114.94 769.83,178.80" fill="#6ED0E0" fill-opacity="0.1"/><polygon points="23.58,178.80 23.58,104.38 48.45,104.38 73.33,104.38 98.20,104.38 123.08,104.38 147.95,104.38 172.83,104.38 197.70,104.38 222.58,104.38 247.45,104.38 272.33,104.38 297.20,125.50 322.08,125.50 346.95,104.38 371.83,104.38 396.70,104.38 421.58,104.38 446.45,104.38 471.33,104.38 496.20,104.38 521.08,104.38 545.95,104.38 570.83,104.38 595.70,104.38 620.58,104.38 645.45,93.82 670.33,93.82 695.20,104.38 720.08,104.38 744.95,104.38 769.83,104.38 769.83,178.80" fill="#EF843C" fill-opacity="0.1"/><polygon points="23.58,178.80 23.58,136.06 48.45,136.06 73.33,136.06 98.20,136.06 123.08,136.06 147.95,136.06 172.83,136.06 197.70,136.06 222.58,136.06 247.45,136.06 272.33,136.06 297.20,136.06 322.08,125.50 346.95,125.50 371.83,146.62 396.70,146.62 421.58,136.06 446.45,136.06 471.33,136.06 496.20,136.06 521.08,136.06 545.95,136.06 570.83,125.50 595.70,125.50 620.58,136.06 645.45,136.06 670.33,125.50 695.20,125.50 720.08,136.06 744.95,136.06 769.83,136.06 769.83,178.80" fill="#E24D42" fill-opacity="0.1"/><polyline points="23.58,125.50 48.45,125.50 73.33,125.50 98.20,136.06 123.08,136.06 147.95,146.62 172.83,146.62 197.70,136.06 222.58,136.06 247.45,136.06 272.33,136.06 297.20,136.06 322.08,136.06 346.95,146.62 371.83,146.62 396.70,136.06 421.58,136.06 446.45,136.06 471.33,136.06 496.20,146.62 521.08,146.62 545.95,125.50 570.83,125.50 595.70,146.62 620.58,146.62 645.45,146.62 670.33,146.62 695.20,136.06 720.08,136.06 744.95,136.06 769.83,136.06" fill="none" stroke="#7EB26D" stroke-width="1.9" stroke-opacity="0.64" stroke-linejoin="round"/><polyline points="23.58,114.94 48.45,114.94 73.33,114.94 98.20,114.94 123.08,114.94 147.95,114.94 172.83,104.38 197.70,104.38 222.58,114.94 247.45,114.94 272.33,114.94 297.20,114.94 322.08,125.50 346.95,125.50 371.83,125.50 396.70,125.50 421.58,114.94 446.45,114.94 471.33,104.38 496.20,104.38 521.08,104.38 545.95,104.38 570.83,93.82 595.70,93.82 620.58,93.82 645.45,93.82 670.33,93.82 695.20,93.82 720.08,93.82 744.95,93.82 769.83,93.82" fill="none" stroke="#EAB839" stroke-width="1.9" stroke-opacity="0.64" stroke-linejoin="round"/><polyline points="23.58,83.26 48.45,83.26 73.33,93.82 98.20,93.82 123.08,104.38 147.95,104.38 172.83,104.38 197.70,104.38 222.58,114.94 247.45,114.94 272.33,93.82 297.20,93.82 322.08,104.38 346.95,104.38 371.83,125.50 396.70,125.50 421.58,104.38 446.45,104.38 471.33,104.38 496.20,104.38 521.08,104.38 545.95,104.38 570.83,125.50 595.70,125.50 620.58,114.94 645.45,114.94 670.33,104.38 695.20,104.38 720.08,104.38 744.95,104.38 769.83,114.94" fill="none" stroke="#6ED0E0" stroke-width="1.9" stroke-opacity="0.64" stroke-linejoin="round"/><polyline points="23.58,104.38 48.45,104.38 73.33,104.38 98.20,104.38 123.08,104.38 147.95,104.38 172.83,104.38 197.70,104.38 222.58,104.38 247.45,104.38 272.33,104.38 297.20,125.50 322.08,125.50 346.95,104.38 371.83,104.38 396.70,104.38 421.58,104.38 446.45,104.38 471.33,104.38 496.20,104.38 521.08,104.38 545.95,104.38 570.83,104.38 595.70,104.38 620.58,104.38 645.45,93.82 670.33,93.82 695.20,104.38 720.08,104.38 744.95,104.38 769.83,104.38" fill="none" stroke="#EF843C" stroke-width="1.9" stroke-opacity="0.64" stroke-linejoin="round"/><polyline points="23.58,136.06 48.45,136.06 73.33,136.06 98.20,136.06 123.08,136.06 147.95,136.06 172.83,136.06 197.70,136.06 222.58,136.06 247.45,136.06 272.33,136.06 297.20,136.06 322.08,125.50 346.95,125.50 371.83,146.62 396.70,146.62 421.58,136.06 446.45,136.06 471.33,136.06 496.20,136.06 521.08,136.06 545.95,136.06 570.83,125.50 595.70,125.50 620.58,136.06 645.45,136.06 670.33,125.50 695.20,125.50 720.08,136.06 744.95,136.06 769.83,136.06" fill="none" stroke="#E24D42" stroke-width="1.9" stroke-opacity="0.64" stroke-linejoin="round"/></g></svg>
<div class="t" style="left:903.83px;top:720.90px;font-size:12px;line-height:18px;color:#c7d0d9;letter-spacing:-0.263px;-webkit-text-stroke:0.2px currentColor;">27.5</div>
<div class="t" style="left:903.83px;top:747.30px;font-size:12px;line-height:18px;color:#c7d0d9;letter-spacing:-0.263px;-webkit-text-stroke:0.2px currentColor;">25.0</div>
<div class="t" style="left:903.83px;top:773.70px;font-size:12px;line-height:18px;color:#c7d0d9;letter-spacing:-0.263px;-webkit-text-stroke:0.2px currentColor;">22.5</div>
<div class="t" style="left:903.83px;top:800.10px;font-size:12px;line-height:18px;color:#c7d0d9;letter-spacing:-0.263px;-webkit-text-stroke:0.2px currentColor;">20.0</div>
<div class="t" style="left:903.83px;top:826.50px;font-size:12px;line-height:18px;color:#c7d0d9;letter-spacing:-0.263px;-webkit-text-stroke:0.2px currentColor;">17.5</div>
<div class="t" style="left:903.83px;top:852.90px;font-size:12px;line-height:18px;color:#c7d0d9;letter-spacing:-0.263px;-webkit-text-stroke:0.2px currentColor;">15.0</div>
<div class="t" style="left:977.67px;top:866.10px;font-size:12px;line-height:18px;color:#c7d0d9;letter-spacing:-0.240px;-webkit-text-stroke:0.2px currentColor;">17:36</div>
<div class="t" style="left:1077.17px;top:866.10px;font-size:12px;line-height:18px;color:#c7d0d9;letter-spacing:-0.240px;-webkit-text-stroke:0.2px currentColor;">17:38</div>
<div class="t" style="left:1176.67px;top:866.10px;font-size:12px;line-height:18px;color:#c7d0d9;letter-spacing:-0.240px;-webkit-text-stroke:0.2px currentColor;">17:40</div>
<div class="t" style="left:1276.17px;top:866.10px;font-size:12px;line-height:18px;color:#c7d0d9;letter-spacing:-0.240px;-webkit-text-stroke:0.2px currentColor;">17:42</div>
<div class="t" style="left:1375.67px;top:866.10px;font-size:12px;line-height:18px;color:#c7d0d9;letter-spacing:-0.240px;-webkit-text-stroke:0.2px currentColor;">17:44</div>
<div class="t" style="left:1475.17px;top:866.10px;font-size:12px;line-height:18px;color:#c7d0d9;letter-spacing:-0.240px;-webkit-text-stroke:0.2px currentColor;">17:46</div>
<div class="t" style="left:1574.67px;top:866.10px;font-size:12px;line-height:18px;color:#c7d0d9;letter-spacing:-0.240px;-webkit-text-stroke:0.2px currentColor;">17:48</div>
<div class="b" style="left:908.0px;top:889.8px;width:786.5px;height:81.4px;overflow:hidden;"><div class="b" style="left:12.5px;top:29.8px;width:11.3px;height:1.5px;background:#7EB26D;opacity:0.82;"></div><div class="t" style="left:33.10px;top:21.50px;font-size:12px;line-height:18px;color:#d2d5da;letter-spacing:-0.043px;-webkit-text-stroke:0.2px currentColor;">messaging-service-7bc654b676-sdmnk</div><div class="t" style="left:631.79px;top:21.50px;font-size:12px;line-height:18px;color:#d2d5da;letter-spacing:-0.234px;-webkit-text-stroke:0.2px currentColor;">18</div><div class="t" style="left:670.89px;top:21.50px;font-size:12px;line-height:18px;color:#d2d5da;letter-spacing:-0.234px;-webkit-text-stroke:0.2px currentColor;">20</div><div class="t" style="left:709.69px;top:21.50px;font-size:12px;line-height:18px;color:#d2d5da;letter-spacing:-0.234px;-webkit-text-stroke:0.2px currentColor;">19</div><div class="t" style="left:758.79px;top:21.50px;font-size:12px;line-height:18px;color:#d2d5da;letter-spacing:-0.234px;-webkit-text-stroke:0.2px currentColor;">19</div><div class="b" style="left:0px;top:43.5px;width:782.0px;height:25px;background:#191b1f;"></div><div class="b" style="left:12.5px;top:54.8px;width:11.3px;height:1.5px;background:#EAB839;opacity:0.82;"></div><div class="t" style="left:33.10px;top:46.50px;font-size:12px;line-height:18px;color:#d2d5da;letter-spacing:-0.042px;-webkit-text-stroke:0.2px currentColor;">messaging-service-7bc654b676-js6w7</div><div class="t" style="left:631.79px;top:46.50px;font-size:12px;line-height:18px;color:#d2d5da;letter-spacing:-0.234px;-webkit-text-stroke:0.2px currentColor;">20</div><div class="t" style="left:670.89px;top:46.50px;font-size:12px;line-height:18px;color:#d2d5da;letter-spacing:-0.234px;-webkit-text-stroke:0.2px currentColor;">23</div><div class="t" style="left:709.69px;top:46.50px;font-size:12px;line-height:18px;color:#d2d5da;letter-spacing:-0.234px;-webkit-text-stroke:0.2px currentColor;">22</div><div class="t" style="left:758.79px;top:46.50px;font-size:12px;line-height:18px;color:#d2d5da;letter-spacing:-0.234px;-webkit-text-stroke:0.2px currentColor;">23</div><div class="b" style="left:12.5px;top:79.8px;width:11.3px;height:1.5px;background:#6ED0E0;opacity:0.82;"></div><div class="t" style="left:33.10px;top:71.50px;font-size:12px;line-height:18px;color:#d2d5da;letter-spacing:-0.041px;-webkit-text-stroke:0.2px currentColor;">messaging-service-7bc654b676-25jlr</div><div class="t" style="left:631.79px;top:71.50px;font-size:12px;line-height:18px;color:#d2d5da;letter-spacing:-0.234px;-webkit-text-stroke:0.2px currentColor;">20</div><div class="t" style="left:670.89px;top:71.50px;font-size:12px;line-height:18px;color:#d2d5da;letter-spacing:-0.234px;-webkit-text-stroke:0.2px currentColor;">24</div><div class="t" style="left:709.69px;top:71.50px;font-size:12px;line-height:18px;color:#d2d5da;letter-spacing:-0.234px;-webkit-text-stroke:0.2px currentColor;">22</div><div class="t" style="left:758.79px;top:71.50px;font-size:12px;line-height:18px;color:#d2d5da;letter-spacing:-0.234px;-webkit-text-stroke:0.2px currentColor;">21</div><div class="b" style="left:0px;top:93.5px;width:782.0px;height:25px;background:#191b1f;"></div><div class="t" style="left:625.76px;top:-0.60px;font-size:12px;line-height:18px;color:#33a2e5;letter-spacing:-0.097px;-webkit-text-stroke:0.45px currentColor;">min</div><div class="t" style="left:661.56px;top:-0.60px;font-size:12px;line-height:18px;color:#33a2e5;letter-spacing:-0.113px;-webkit-text-stroke:0.45px currentColor;">max</div><div class="t" style="left:703.65px;top:-0.60px;font-size:12px;line-height:18px;color:#33a2e5;letter-spacing:-0.097px;-webkit-text-stroke:0.45px currentColor;">avg</div><div class="t" style="left:735.03px;top:-0.60px;font-size:12px;line-height:18px;color:#33a2e5;letter-spacing:-0.080px;-webkit-text-stroke:0.45px currentColor;">current</div></div>
<div class="b" style="left:1687.4px;top:892.1999999999999px;width:7.6px;height:44.5px;background:rgba(72,74,88,0.72);border-radius:4px;"></div>
<div class="b" style="left:799px;top:183px;width:157px;height:95px;background:#141619;border:1px solid #202226;box-sizing:border-box;box-shadow:0 2px 8px 1px rgba(0,0,0,0.75);"></div>
<svg class="b" style="left:812.5px;top:191.5px;" width="15" height="15" viewBox="0 0 15 15"><g fill="none" stroke="#d8d9da" stroke-width="1.4"><path d="M1 7.5 C3 3.6 5.4 2.6 7.5 2.6 C9.6 2.6 12 3.6 14 7.5 C12 11.4 9.6 12.4 7.5 12.4 C5.4 12.4 3 11.4 1 7.5 Z"/><circle cx="7.5" cy="7.5" r="2.1"/></g></svg>
<div class="t" style="left:836.30px;top:188.50px;font-size:14px;line-height:21px;color:#d8d9da;letter-spacing:-0.073px;-webkit-text-stroke:0.7px currentColor;">View</div>
<svg class="b" style="left:898.5px;top:193px;" width="15" height="12" viewBox="0 0 15 12"><g fill="none" stroke="#7b8087" stroke-width="1.2"><rect x="0.8" y="1.4" width="13.4" height="9" rx="1.3"/></g><g fill="#7b8087"><rect x="3" y="3.8" width="1.3" height="1.2"/><rect x="5.4" y="3.8" width="1.3" height="1.2"/><rect x="7.9" y="3.8" width="1.3" height="1.2"/><rect x="10.5" y="3.8" width="1.3" height="1.2"/><rect x="3" y="6.9" width="1.3" height="1.2"/><rect x="5.2" y="6.9" width="4.6" height="1.2"/><rect x="10.7" y="6.9" width="1.3" height="1.2"/></g></svg>
<div class="t" style="left:926.00px;top:189.00px;font-size:14px;line-height:21px;color:#7b8087;">v</div>
<svg class="b" style="left:812px;top:222px;" width="16" height="16" viewBox="0 0 24 24"><g fill="none" stroke="#d8d9da" stroke-width="2.0"><circle cx="17.5" cy="5.5" r="2.7"/><circle cx="6" cy="12" r="2.7"/><circle cx="17.5" cy="18.5" r="2.7"/><path d="M8.4 10.7 L15.1 6.8 M8.4 13.3 L15.1 17.2"/></g></svg>
<div class="t" style="left:836.30px;top:219.50px;font-size:14px;line-height:21px;color:#d8d9da;letter-spacing:-0.392px;-webkit-text-stroke:0.7px currentColor;">Share</div>
<svg class="b" style="left:898.5px;top:224px;" width="15" height="12" viewBox="0 0 15 12"><g fill="none" stroke="#7b8087" stroke-width="1.2"><rect x="0.8" y="1.4" width="13.4" height="9" rx="1.3"/></g><g fill="#7b8087"><rect x="3" y="3.8" width="1.3" height="1.2"/><rect x="5.4" y="3.8" width="1.3" height="1.2"/><rect x="7.9" y="3.8" width="1.3" height="1.2"/><rect x="10.5" y="3.8" width="1.3" height="1.2"/><rect x="3" y="6.9" width="1.3" height="1.2"/><rect x="5.2" y="6.9" width="4.6" height="1.2"/><rect x="10.7" y="6.9" width="1.3" height="1.2"/></g></svg>
<div class="t" style="left:926.00px;top:220.00px;font-size:14px;line-height:21px;color:#7b8087;letter-spacing:-0.125px;">p s</div>
<svg class="b" style="left:812.5px;top:253.5px;" width="15" height="15" viewBox="0 0 15 15"><g fill="none" stroke="#d8d9da" stroke-width="1.4"><circle cx="7.5" cy="7.5" r="6.3"/></g><rect x="6.8" y="6.6" width="1.5" height="4.2" fill="#d8d9da"/><circle cx="7.55" cy="4.6" r="0.95" fill="#d8d9da"/></svg>
<div class="t" style="left:836.30px;top:250.50px;font-size:14px;line-height:21px;color:#d8d9da;letter-spacing:0.095px;-webkit-text-stroke:0.7px currentColor;">Inspect</div>
<svg class="b" style="left:898.5px;top:255px;" width="15" height="12" viewBox="0 0 15 12"><g fill="none" stroke="#7b8087" stroke-width="1.2"><rect x="0.8" y="1.4" width="13.4" height="9" rx="1.3"/></g><g fill="#7b8087"><rect x="3" y="3.8" width="1.3" height="1.2"/><rect x="5.4" y="3.8" width="1.3" height="1.2"/><rect x="7.9" y="3.8" width="1.3" height="1.2"/><rect x="10.5" y="3.8" width="1.3" height="1.2"/><rect x="3" y="6.9" width="1.3" height="1.2"/><rect x="5.2" y="6.9" width="4.6" height="1.2"/><rect x="10.7" y="6.9" width="1.3" height="1.2"/></g></svg>
<div class="t" style="left:926.30px;top:251.00px;font-size:14px;line-height:21px;color:#7b8087;">i</div>
<svg class="b" style="left:935px;top:253px;" width="16" height="16" viewBox="0 0 16 16"><path d="M6.35 4.7 L9.65 8 L6.35 11.3" fill="none" stroke="#7b8087" stroke-width="1.3" stroke-linecap="round" stroke-linejoin="round"/></svg>
</div></body></html>
